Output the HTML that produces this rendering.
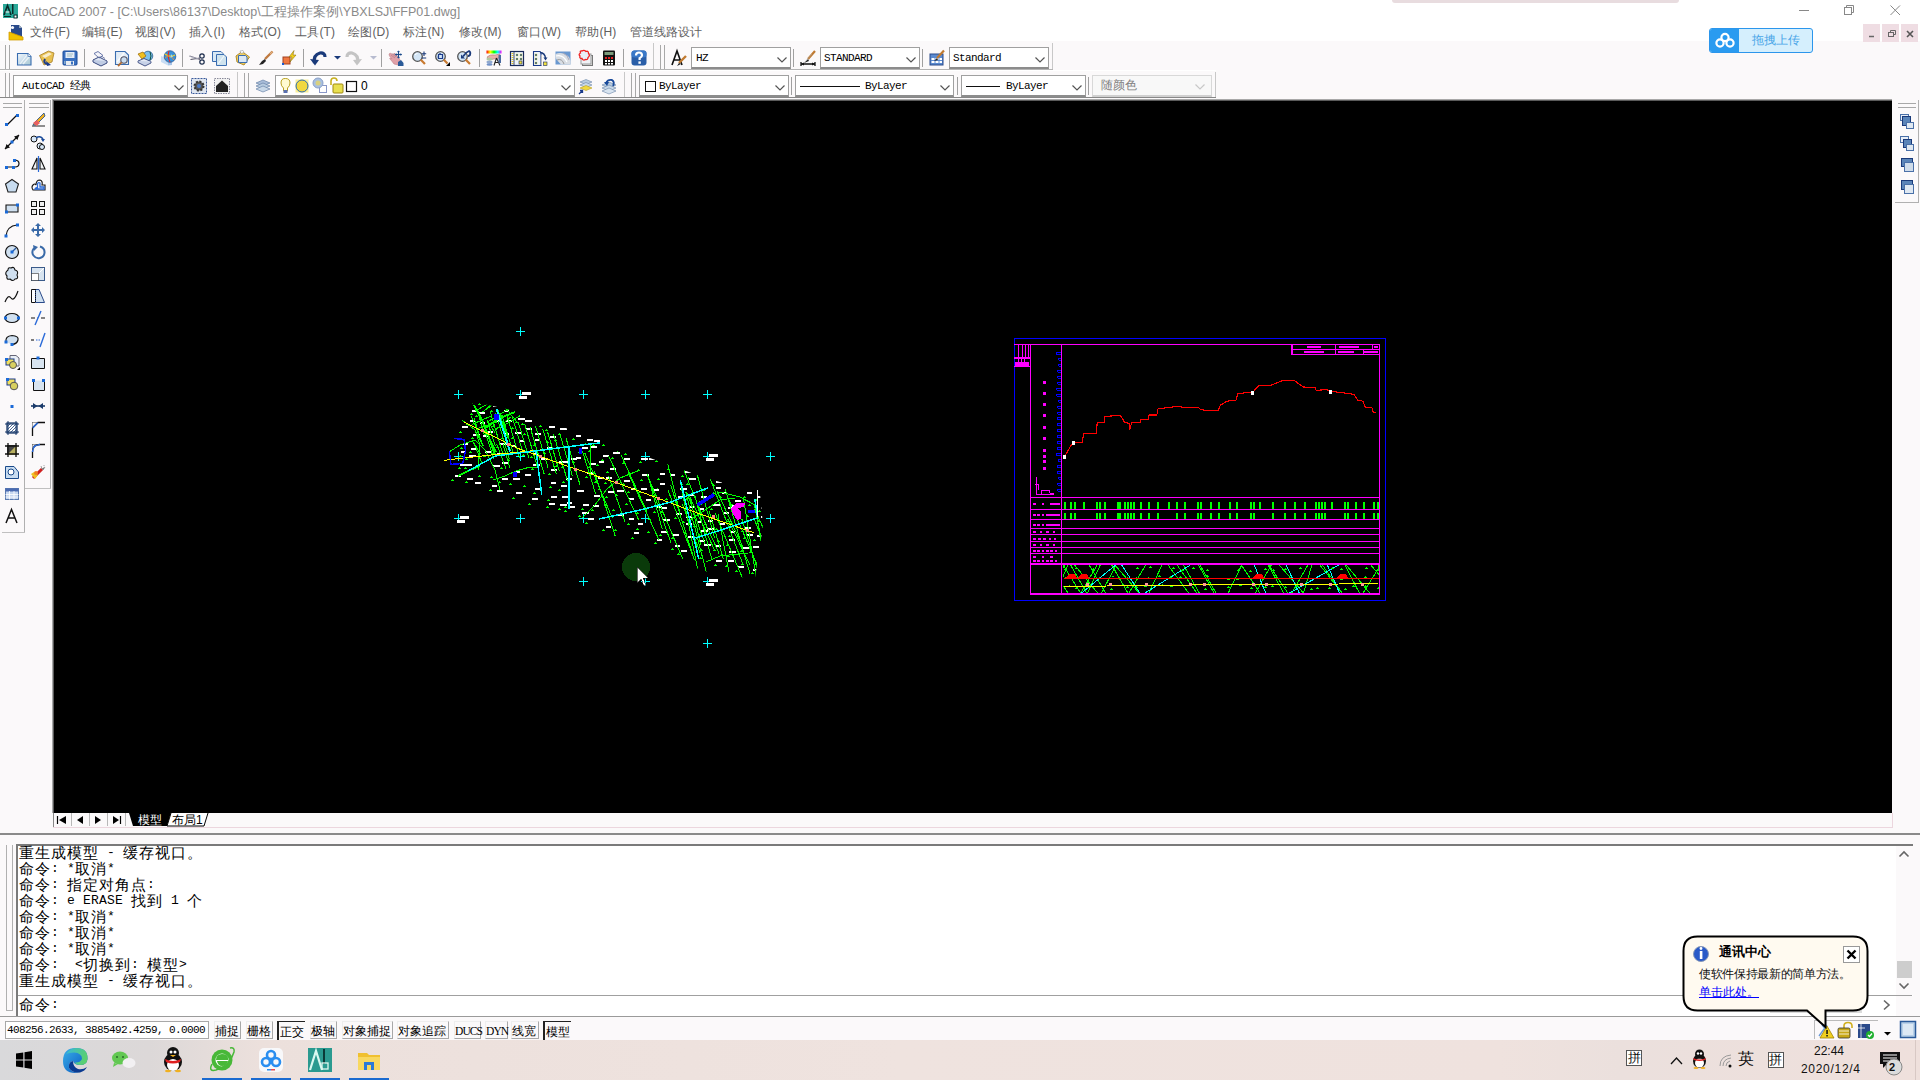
<!DOCTYPE html>
<html><head><meta charset="utf-8">
<style>
*{margin:0;padding:0;box-sizing:border-box}
html,body{width:1920px;height:1080px;overflow:hidden;background:#fbf9fa;font-family:"Liberation Sans", sans-serif}
.a{position:absolute}
.t{position:absolute;white-space:nowrap;line-height:1}
svg{position:absolute;overflow:visible}
.vl{position:absolute;width:1px;background:#a8a8a8}
.hl{position:absolute;height:1px;background:#a8a8a8}
.combo{position:absolute;background:#fff;border:1px solid #a0a0a0;border-bottom:2px solid #8c8c8c}
.mono{font-family:"Liberation Mono", monospace}
</style></head><body>

<div class="a" style="left:0;top:0;width:1920px;height:41px;background:#fff"></div>
<div class="a" style="left:1392px;top:0;width:287px;height:3px;background:#e8dcdf;border-radius:0 0 3px 3px"></div>
<svg style="left:3px;top:4px" width="15" height="15" viewBox="0 0 15 15">
<rect x="0" y="0" width="15" height="14" fill="#2aa898"/>
<path d="M1 11 L4.5 1.5 L8 11" stroke="#0a2a28" stroke-width="1.6" fill="none"/>
<path d="M2.5 8 L6.5 8" stroke="#fff" stroke-width="1"/>
<rect x="9" y="0" width="1.5" height="10" fill="#0a2a28"/>
<rect x="11" y="11" width="3" height="3" fill="#fff" stroke="#0a2a28" stroke-width="1"/>
<rect x="1" y="12" width="7" height="1" fill="#0a2a28"/>
</svg>
<div class="t" style="left:23px;top:6px;font-size:12.5px;color:#8a8a8a">AutoCAD 2007 - [C:\Users\86137\Desktop\<span style="display:inline-block;width:78.6px;vertical-align:top">工程操作案例</span>\YBXLSJ\FFP01.dwg]</div>
<svg style="left:1795px;top:4px" width="120" height="14" viewBox="0 0 120 14">
<path d="M4 6.5 H14" stroke="#888" stroke-width="1"/>
<rect x="49.5" y="3.5" width="7" height="7" fill="none" stroke="#888"/>
<path d="M51.5 3.5 V1.5 H58.5 V8.5 H56.5" fill="none" stroke="#888"/>
<path d="M95.5 1.5 L105 11 M105 1.5 L95.5 11" stroke="#888" stroke-width="1"/>
</svg>
<svg style="left:8px;top:24px" width="16" height="17" viewBox="0 0 16 17">
<path d="M3 1 H11 L14 4 V14 H3 Z" fill="#2a4a8a"/>
<path d="M11 1 L14 4 H11Z" fill="#9ab"/>
<circle cx="4.5" cy="3.5" r="1.6" fill="#fff"/>
<path d="M1 8 L15 13 V16 H1 Z" fill="#f2c200" stroke="#d09a00" stroke-width="0.8"/>
</svg>
<div class="t" style="left:30px;top:26px;font-size:12px;color:#606060"><span style="display:inline-block;width:24.6px;vertical-align:top">文件</span>(F)</div>
<div class="t" style="left:82px;top:26px;font-size:12px;color:#606060"><span style="display:inline-block;width:24.6px;vertical-align:top">编辑</span>(E)</div>
<div class="t" style="left:135px;top:26px;font-size:12px;color:#606060"><span style="display:inline-block;width:24.6px;vertical-align:top">视图</span>(V)</div>
<div class="t" style="left:189px;top:26px;font-size:12px;color:#606060"><span style="display:inline-block;width:24.6px;vertical-align:top">插入</span>(I)</div>
<div class="t" style="left:239px;top:26px;font-size:12px;color:#606060"><span style="display:inline-block;width:24.6px;vertical-align:top">格式</span>(O)</div>
<div class="t" style="left:295px;top:26px;font-size:12px;color:#606060"><span style="display:inline-block;width:24.6px;vertical-align:top">工具</span>(T)</div>
<div class="t" style="left:348px;top:26px;font-size:12px;color:#606060"><span style="display:inline-block;width:24.6px;vertical-align:top">绘图</span>(D)</div>
<div class="t" style="left:403px;top:26px;font-size:12px;color:#606060"><span style="display:inline-block;width:24.6px;vertical-align:top">标注</span>(N)</div>
<div class="t" style="left:459px;top:26px;font-size:12px;color:#606060"><span style="display:inline-block;width:24.6px;vertical-align:top">修改</span>(M)</div>
<div class="t" style="left:517px;top:26px;font-size:12px;color:#606060"><span style="display:inline-block;width:24.6px;vertical-align:top">窗口</span>(W)</div>
<div class="t" style="left:575px;top:26px;font-size:12px;color:#606060"><span style="display:inline-block;width:24.6px;vertical-align:top">帮助</span>(H)</div>
<div class="t" style="left:630px;top:26px;font-size:12px;color:#606060"><span style="display:inline-block;width:72.6px;vertical-align:top">管道线路设计</span></div>
<div class="a" style="left:1863px;top:24px;width:17px;height:18px;background:#efdde3"></div>
<div class="a" style="left:1882px;top:24px;width:17px;height:18px;background:#efdde3"></div>
<div class="a" style="left:1901px;top:24px;width:17px;height:18px;background:#efdde3"></div>
<svg style="left:1863px;top:24px" width="56" height="18" viewBox="0 0 56 18">
<path d="M6 12.5 H11" stroke="#666" stroke-width="1.5"/>
<rect x="25.5" y="8.5" width="5" height="4" fill="none" stroke="#666"/>
<path d="M27.5 8.5 V6.5 H32.5 V10.5 H30.5" fill="none" stroke="#666"/>
<path d="M44 7 L50 13 M50 7 L44 13" stroke="#555" stroke-width="1.6"/>
</svg>
<div class="a" style="left:1709px;top:28px;width:104px;height:25px;border:1px solid #2b96ec;border-radius:3px;background:#d5effd;overflow:hidden">
<div class="a" style="left:0;top:0;width:29px;height:23px;background:#2a9bf0"></div>
<svg style="left:5px;top:3px" width="20" height="17" viewBox="0 0 20 17">
<circle cx="10" cy="5.5" r="3.6" fill="none" stroke="#fff" stroke-width="2.2"/>
<circle cx="5" cy="11" r="3.6" fill="none" stroke="#fff" stroke-width="2.2"/>
<circle cx="15" cy="11" r="3.6" fill="none" stroke="#fff" stroke-width="2.2"/>
</svg>
<div class="t" style="left:42px;top:5px;font-size:12px;color:#4aa6e8">拖拽上传</div>
</div>
<div class="a" style="left:0;top:69px;width:1053px;height:1px;background:#b4b4b4"></div>
<div class="a" style="left:0;top:70px;width:1216px;height:1px;background:#fff"></div>
<div class="a" style="left:0;top:97px;width:1216px;height:1px;background:#888"></div>
<div class="a" style="left:5px;top:45px;width:1px;height:24px;background:#a8a8a8"></div>
<div class="a" style="left:9px;top:45px;width:1px;height:24px;background:#a8a8a8"></div>
<svg style="left:0;top:0" width="0" height="0"><defs><linearGradient id="rb" x1="0" x2="1"><stop offset="0" stop-color="#f00"/><stop offset="0.25" stop-color="#ff0"/><stop offset="0.5" stop-color="#0f0"/><stop offset="0.75" stop-color="#0ff"/><stop offset="1" stop-color="#f0f"/></linearGradient></defs></svg>
<svg style="left:16px;top:50px" width="16" height="16" viewBox="0 0 16 16"><defs><linearGradient id="ng" x1="0" y1="0" x2="1" y2="1"><stop offset="0" stop-color="#f4f8fc"/><stop offset="0.5" stop-color="#c8dcea"/><stop offset="1" stop-color="#a8c8d0"/></linearGradient></defs><path d="M1.5 3.5 H12 L15 6.5 V15 H1.5Z" fill="url(#ng)" stroke="#3a6db0" stroke-width="1.1"/><path d="M12 3.5 V6.5 H15" fill="#fff" stroke="#3a6db0" stroke-width="0.8"/><path d="M4 14 L11 5 M7 14 L13 7" stroke="#fff" stroke-width="1.2" opacity="0.7"/></svg>
<svg style="left:39px;top:50px" width="16" height="16" viewBox="0 0 16 16"><path d="M0.5 5.5 L9.5 1 L15 3 L13 12 L5 15Z" fill="#e8c050" stroke="#a8802a" stroke-width="0.8"/><path d="M3 6 L10 2.5 L13 4 L6 8Z" fill="#fff" opacity="0.7"/><path d="M6 9 Q4 13 8 14" fill="none" stroke="#1a3a8a" stroke-width="2"/><path d="M7 11 L12 15 L8 16Z" fill="#1a3a8a"/></svg>
<svg style="left:62px;top:50px" width="16" height="16" viewBox="0 0 16 16"><rect x="1" y="1" width="14" height="14" rx="1" fill="#3a70c0" stroke="#1a4a9a"/><rect x="3.5" y="2" width="9" height="6" fill="#e4ecf8"/><path d="M5 4 H11 M5 6 H10" stroke="#8aa" stroke-width="0.7"/><rect x="4" y="11" width="8" height="4" fill="#e8ecf0"/><rect x="2" y="11" width="1.5" height="3" fill="#8ac"/><rect x="9" y="11.5" width="2" height="3" fill="#3a70c0"/></svg>
<svg style="left:92px;top:50px" width="16" height="16" viewBox="0 0 16 16"><path d="M2 3.5 L6 1.5 L11 5.5 L7 8Z" fill="#f4f4fa" stroke="#5a6aa0" stroke-width="0.9"/><path d="M1 10 L7 7 L15 11 L9 14.5Z" fill="#dfe6f4" stroke="#3a4a80" stroke-width="1"/><path d="M1 10 V12 L9 16 L15 13 V11" fill="#c0cce4" stroke="#3a4a80" stroke-width="1"/><path d="M7 8 L10 6.5 L13 8.5" fill="none" stroke="#5a6aa0" stroke-width="0.8"/></svg>
<svg style="left:114px;top:50px" width="16" height="16" viewBox="0 0 16 16"><path d="M1.5 1.5 H11 L14.5 5 V14.5 H1.5Z" fill="#e2ecf6" stroke="#3a6db0" stroke-width="1.1"/><path d="M3 12 L10 3" stroke="#fff" stroke-width="1.5" opacity="0.8"/><circle cx="10" cy="10" r="3.2" fill="#c8dcf0" stroke="#556" stroke-width="1.1"/><path d="M7.6 12.4 L4 16" stroke="#b06a30" stroke-width="1.8"/></svg>
<svg style="left:137px;top:50px" width="16" height="16" viewBox="0 0 16 16"><circle cx="11" cy="6" r="4.8" fill="#7ac0ee" stroke="#2a5a8a" stroke-width="0.8"/><path d="M13 2 Q15 6 13 10" stroke="#0a4a3a" fill="none"/><path d="M1 4 L6 2 L9 6 L5 9Z" fill="#f0c020" stroke="#a07010" stroke-width="0.8"/><path d="M1 11 L7 8.5 L14 11.5 L8 14.5Z" fill="#e4eaf6" stroke="#3a4a80" stroke-width="0.9"/><path d="M1 11 V12.5 L8 16 L14 13 V11.5" fill="#c8d2e8" stroke="#3a4a80" stroke-width="0.9"/></svg>
<svg style="left:160px;top:50px" width="16" height="16" viewBox="0 0 16 16"><path d="M1 6 L8 9 V15.5 L1 12Z" fill="#c8dcf4"/><path d="M8 9 L12 11 V15 L8 15.5Z" fill="#a8c4e8"/><circle cx="10" cy="6.5" r="5.8" fill="#3a90d8" stroke="#1a4a8a" stroke-width="0.7"/><path d="M5 4 Q10 8 15 5" stroke="#f0d020" fill="none" stroke-width="1.1"/><path d="M9 1 Q7 6 10 12" stroke="#e02a2a" fill="none" stroke-width="1.1"/><path d="M5 8 Q10 3 14 10" stroke="#f09030" fill="none" stroke-width="0.9"/><path d="M11 4 L13 6.5 L10.5 8Z" fill="#aee" opacity="0.8"/></svg>
<svg style="left:189px;top:50px" width="16" height="16" viewBox="0 0 16 16"><path d="M0.5 6 L11 9.5 M1.5 9.5 L11 8" stroke="#556" stroke-width="1.1"/><path d="M1 6.5 L10 9" stroke="#dde" stroke-width="0.6"/><circle cx="13" cy="6" r="2.2" fill="none" stroke="#1a2a4a" stroke-width="1.2"/><circle cx="13" cy="12" r="2.2" fill="none" stroke="#1a2a4a" stroke-width="1.2"/></svg>
<svg style="left:212px;top:50px" width="16" height="16" viewBox="0 0 16 16"><path d="M0.5 1.5 H9 L11 3.5 V11.5 H0.5Z" fill="#d8e8f4" stroke="#3a6db0"/><path d="M4.5 4.5 H12 L14.5 7 V15.5 H4.5Z" fill="#cfe3ee" stroke="#3a6db0"/><path d="M6 14 L12 6" stroke="#fff" stroke-width="1.2" opacity="0.7"/></svg>
<svg style="left:235px;top:50px" width="16" height="16" viewBox="0 0 16 16"><path d="M1 6 L7 1.5 L14.5 7 L9 15 L2 12Z" fill="#f0d060" stroke="#a88020" stroke-width="0.9"/><path d="M5 1 L8 0.5 L9 2.5 L6 3.5Z" fill="#fff" stroke="#888" stroke-width="0.5"/><path d="M3.5 5.5 H10.5 L12 7 V12.5 H3.5Z" fill="#dbe8f4" stroke="#3a6db0"/></svg>
<svg style="left:258px;top:50px" width="16" height="16" viewBox="0 0 16 16"><path d="M14.5 1.5 L7 9" stroke="#c07a40" stroke-width="2.4"/><path d="M14.5 1.5 L12 4" stroke="#e0b080" stroke-width="1.2"/><path d="M7 9 L4 11 L1 15 L5 14 L8 11Z" fill="#222"/></svg>
<svg style="left:281px;top:50px" width="16" height="16" viewBox="0 0 16 16"><rect x="2" y="7" width="7" height="7" fill="#f07840" stroke="#a04020"/><rect x="1" y="13" width="2" height="2" fill="#1a5ad0"/><path d="M13 0.5 L8 7 H11 L9 12 L15 5 H12Z" fill="#f0d020" stroke="#806000" stroke-width="0.5"/></svg>
<svg style="left:310px;top:50px" width="16" height="16" viewBox="0 0 16 16"><path d="M4.5 13 Q3 5 10 3 Q15 2.5 15 7" fill="none" stroke="#1a3a7a" stroke-width="3.2"/><path d="M0 9 L5 15.5 L9 10Z" fill="#1a3a7a"/></svg>
<svg style="left:346px;top:50px" width="16" height="16" viewBox="0 0 16 16"><path d="M11.5 13 Q13 5 6 3 Q1 2.5 1 7" fill="none" stroke="#c4c4c4" stroke-width="3.2"/><path d="M16 9 L11 15.5 L7 10Z" fill="#c4c4c4"/></svg>
<svg style="left:388px;top:50px" width="16" height="16" viewBox="0 0 16 16"><path d="M1 4 Q2 2.5 4 4 L6 5 Q5 3 7 3.5 L11 8 L13 12 L10 15 L6 14 L3 10 Q1 9 2 8 L4 9 L1.5 6Z" fill="#e0a0a8" stroke="#c08088" stroke-width="0.6"/><path d="M3 5 L7 8 M4 3.5 L8 7 M6 3.5 L9 6.5" stroke="#a07080" stroke-width="0.5"/><path d="M10 12 L13 10 L15.5 13 V16 H10Z" fill="#2a5a98"/><path d="M10.5 1 V8 M7.5 4.5 H13.5" stroke="#1a4a8a" stroke-width="1.2"/><path d="M10.5 0.5 L9 2 H12Z M10.5 8.5 L9 7 H12Z M7 4.5 L8.5 3 V6Z M14 4.5 L12.5 3 V6Z" fill="#1a4a8a"/></svg>
<svg style="left:411px;top:50px" width="16" height="16" viewBox="0 0 16 16"><circle cx="6.5" cy="6.5" r="4.8" fill="#d4e6f6" stroke="#555" stroke-width="1.3"/><path d="M4 5 Q5 3.5 6.5 3.5" stroke="#fff" fill="none"/><path d="M9.8 9.8 L14 14" stroke="#c87a30" stroke-width="2.2"/><path d="M13 1.5 V6 M10.8 3.8 H15.2 M10.8 8 H15.2" stroke="#1a3a7a" stroke-width="1.1"/></svg>
<svg style="left:434px;top:50px" width="16" height="16" viewBox="0 0 16 16"><circle cx="6.5" cy="6.5" r="4.8" fill="#d4e6f6" stroke="#555" stroke-width="1.3"/><path d="M4.5 4.5 H8.5 V8.5 H4.5Z M6 3 V4.5 M3.5 7 H4.5" fill="none" stroke="#1a3a8a" stroke-width="1.2"/><path d="M9.8 9.8 L13.5 13.5" stroke="#c87a30" stroke-width="2.2"/><path d="M12 16 L16 12 V16Z" fill="#000"/></svg>
<svg style="left:456px;top:50px" width="16" height="16" viewBox="0 0 16 16"><circle cx="6.5" cy="6.5" r="4.8" fill="#d4e6f6" stroke="#555" stroke-width="1.3"/><path d="M5 4.5 V8.5 H9Z" fill="#1a3a7a"/><path d="M7 6.5 Q10 2 13 1 Q15 2 14 5 Q13 6 12 6" fill="none" stroke="#1a3a7a" stroke-width="1.8"/><path d="M9.8 9.8 L14 14" stroke="#c87a30" stroke-width="2.2"/></svg>
<svg style="left:486px;top:50px" width="16" height="16" viewBox="0 0 16 16"><rect x="0.5" y="0.5" width="15" height="3" fill="url(#rb)"/><path d="M1 7 Q4 4 9 5 L14 4 L13 8 L8 9 L3 10Z" fill="#e8b0a8" stroke="#a06a60" stroke-width="0.5"/><ellipse cx="3.5" cy="9" rx="3" ry="1.5" fill="#b0c8a0"/><ellipse cx="3.5" cy="12" rx="3" ry="1.5" fill="#90a8d0"/><ellipse cx="3.5" cy="14.5" rx="3" ry="1.2" fill="#7090c8"/><path d="M10.5 8 L8 15.5 M10.5 8 L14 15.5 M9 12.5 H12.8" stroke="#222" stroke-width="1.1"/><rect x="12.5" y="5" width="2.5" height="8" fill="#4a6aa0"/></svg>
<svg style="left:509px;top:50px" width="16" height="16" viewBox="0 0 16 16"><rect x="1.5" y="1.5" width="13" height="14" fill="#eef4fa" stroke="#1a2a5a" stroke-width="1.2"/><path d="M3.5 3 V14" stroke="#e0c020" stroke-width="1.8" stroke-dasharray="1 1"/><path d="M5 2 V15" stroke="#1a2a5a" stroke-width="0.8"/><rect x="7" y="4" width="2" height="2" fill="#1a4a8a" stroke="#e0d040" stroke-width="0.4"/><rect x="11" y="4" width="2" height="2" fill="#1a4a8a" stroke="#e0d040" stroke-width="0.4"/><rect x="7" y="8" width="2" height="2" fill="#1a4a8a" stroke="#e0d040" stroke-width="0.4"/><rect x="11" y="8" width="2" height="2" fill="#1a4a8a" stroke="#e0d040" stroke-width="0.4"/><rect x="10" y="11" width="3" height="3" fill="#f0e040" stroke="#1a2a5a" stroke-width="0.6"/></svg>
<svg style="left:532px;top:50px" width="16" height="16" viewBox="0 0 16 16"><path d="M1.5 1.5 H8 L9 3 V15.5 H1.5Z" fill="#eef4fa" stroke="#1a3a8a" stroke-width="1.1"/><rect x="3" y="4" width="2" height="2" fill="#1a4a8a" stroke="#e0d040" stroke-width="0.4"/><rect x="3" y="8" width="2" height="2" fill="#1a4a8a" stroke="#e0d040" stroke-width="0.4"/><rect x="3" y="12" width="2" height="2" fill="#1a4a8a" stroke="#e0d040" stroke-width="0.4"/><path d="M8 2.5 Q13 3 13.5 8" stroke="#1a3a7a" fill="none" stroke-width="1.4"/><path d="M11.5 7.5 L13.5 10.5 L15.5 7.5Z" fill="#1a3a7a"/><rect x="11.5" y="12" width="3.5" height="3.5" fill="#f0e040" stroke="#1a2a5a" stroke-width="0.6"/><path d="M9.5 5 V15" stroke="#bbb"/></svg>
<svg style="left:555px;top:50px" width="16" height="16" viewBox="0 0 16 16"><rect x="0.5" y="1.5" width="15" height="13" fill="#6a98d0"/><path d="M0.5 4 Q7 1 14 7 L15.5 11 V14.5 H6 Q2 10 0.5 8Z" fill="#d8dde4"/><path d="M1 6 Q8 4 12 12" stroke="#fff" fill="none" stroke-width="1.2"/><path d="M2 10 Q7 8 9 14" stroke="#999" fill="none"/><path d="M8 3 Q13 5 14 10" stroke="#aab" fill="none"/></svg>
<svg style="left:578px;top:50px" width="16" height="16" viewBox="0 0 16 16"><rect x="4.5" y="5.5" width="10" height="10" fill="#e4e4e4" stroke="#777"/><rect x="3" y="4" width="10" height="10" fill="#f0f2f6" stroke="#999"/><path d="M2.5 3 Q1.5 0.5 4 1 Q6 -0.5 8 1.5 Q10.5 0.5 10.5 3.5 Q12.5 5.5 10 7.5 Q10 10 7.5 9.5 Q5 11 4 8.5 Q1 8.5 2 6 Q0 4.5 2.5 3Z" fill="#e8eef8" stroke="#f02020" stroke-width="1.3"/></svg>
<svg style="left:601px;top:50px" width="16" height="16" viewBox="0 0 16 16"><rect x="2" y="0.5" width="12" height="15" rx="1" fill="#111"/><rect x="3.5" y="2" width="9" height="3" fill="#7a9a7a"/><g fill="#fff"><rect x="4" y="7" width="2" height="2" fill="#e02020"/><rect x="7" y="7" width="2" height="2" fill="#e02020"/><rect x="10" y="7" width="2" height="2" fill="#e02020"/><rect x="4" y="10" width="2" height="2"/><rect x="7" y="10" width="2" height="2"/><rect x="10" y="10" width="2" height="2"/><rect x="4" y="13" width="2" height="1.5"/><rect x="7" y="13" width="2" height="1.5"/><rect x="10" y="13" width="2" height="1.5"/></g></svg>
<svg style="left:631px;top:50px" width="16" height="16" viewBox="0 0 16 16"><rect x="0.5" y="0.5" width="15" height="15" rx="3" fill="#2a5ea8"/><rect x="0.5" y="0.5" width="15" height="7" rx="3" fill="#3a78c8"/><path d="M5 5.5 Q5 2.5 8 2.5 Q11 2.5 11 5.2 Q11 7 8.6 8.2 V10" fill="none" stroke="#fff" stroke-width="2.2"/><rect x="7.4" y="11.4" width="2.4" height="2.4" fill="#fff"/></svg>
<div class="a" style="left:84px;top:49px;width:1px;height:18px;background:#a0a0a0"></div>
<div class="a" style="left:182px;top:49px;width:1px;height:18px;background:#a0a0a0"></div>
<div class="a" style="left:303px;top:49px;width:1px;height:18px;background:#a0a0a0"></div>
<div class="a" style="left:381px;top:49px;width:1px;height:18px;background:#a0a0a0"></div>
<div class="a" style="left:479px;top:49px;width:1px;height:18px;background:#a0a0a0"></div>
<div class="a" style="left:623px;top:49px;width:1px;height:18px;background:#a0a0a0"></div>
<svg style="left:334px;top:56px" width="8" height="4" viewBox="0 0 8 4"><path d="M0 0 H7 L3.5 3.5Z" fill="#1a3a7a"/></svg>
<svg style="left:370px;top:56px" width="8" height="4" viewBox="0 0 8 4"><path d="M0 0 H7 L3.5 3.5Z" fill="#b8bcd0"/></svg>
<div class="a" style="left:653px;top:43px;width:1px;height:26px;background:#c8c8c8"></div>
<div class="a" style="left:660px;top:45px;width:1px;height:24px;background:#a8a8a8"></div>
<div class="a" style="left:664px;top:45px;width:1px;height:24px;background:#a8a8a8"></div>
<svg style="left:671px;top:50px" width="16" height="16" viewBox="0 0 16 16"><path d="M1 15 L6 1 L11 15 M3 10 H9" stroke="#111" stroke-width="1.6" fill="none"/><path d="M15 6 L8 13" stroke="#c07a30" stroke-width="2.4"/><path d="M8 13 L6 16 L10 14Z" fill="#222"/></svg>
<div class="combo" style="left:691px;top:47px;width:100px;height:22px"></div>
<div class="t" style="left:696px;top:53px;font-family:'Liberation Mono', monospace;font-size:11px;color:#000;letter-spacing:-0.6px">HZ</div>
<svg style="left:777px;top:57px" width="10" height="6" viewBox="0 0 10 6"><path d="M0.5 0.5 L5 5 L9.5 0.5" fill="none" stroke="#555" stroke-width="1.2"/></svg>
<div class="a" style="left:793px;top:49px;width:1px;height:18px;background:#a0a0a0"></div>
<svg style="left:800px;top:50px" width="16" height="16" viewBox="0 0 16 16"><path d="M1 12 V16 M15 12 V16 M1 14 H15" stroke="#111" stroke-width="1.3"/><path d="M1 14 L4 12.5 V15.5Z M15 14 L12 12.5 V15.5Z" fill="#111"/><path d="M15 1 L8 9" stroke="#c07a30" stroke-width="2.2"/><path d="M8 9 L4 13 L9 11Z" fill="#222"/><path d="M4 13 L12 4" stroke="#aaa" stroke-width="0.6"/></svg>
<div class="combo" style="left:820px;top:47px;width:100px;height:22px"></div>
<div class="t" style="left:824px;top:53px;font-family:'Liberation Mono', monospace;font-size:11px;color:#000;letter-spacing:-0.6px">STANDARD</div>
<svg style="left:906px;top:57px" width="10" height="6" viewBox="0 0 10 6"><path d="M0.5 0.5 L5 5 L9.5 0.5" fill="none" stroke="#555" stroke-width="1.2"/></svg>
<div class="a" style="left:922px;top:49px;width:1px;height:18px;background:#a0a0a0"></div>
<svg style="left:929px;top:50px" width="16" height="16" viewBox="0 0 16 16"><rect x="1" y="4" width="13" height="11" fill="#5a8ad0" stroke="#2a4a8a"/><g fill="#fff"><rect x="2.5" y="8" width="3" height="2"/><rect x="6.5" y="8" width="3" height="2"/><rect x="10.5" y="8" width="2.5" height="2"/><rect x="2.5" y="11" width="3" height="2"/><rect x="6.5" y="11" width="3" height="2"/><rect x="10.5" y="11" width="2.5" height="2"/></g><path d="M15 0.5 L8 8" stroke="#c07a30" stroke-width="2.2"/><path d="M8 8 L5 11 L9 10Z" fill="#222"/></svg>
<div class="combo" style="left:949px;top:47px;width:100px;height:22px"></div>
<div class="t" style="left:953px;top:53px;font-family:'Liberation Mono', monospace;font-size:11px;color:#000;letter-spacing:-0.6px">Standard</div>
<svg style="left:1035px;top:57px" width="10" height="6" viewBox="0 0 10 6"><path d="M0.5 0.5 L5 5 L9.5 0.5" fill="none" stroke="#555" stroke-width="1.2"/></svg>
<div class="a" style="left:1052px;top:43px;width:1px;height:26px;background:#c8c8c8"></div>
<div class="a" style="left:5px;top:73px;width:1px;height:24px;background:#a8a8a8"></div>
<div class="a" style="left:9px;top:73px;width:1px;height:24px;background:#a8a8a8"></div>
<div class="combo" style="left:13px;top:75px;width:175px;height:22px"></div>
<div class="t" style="left:22px;top:81px;font-family:'Liberation Mono', monospace;font-size:11px;color:#000;letter-spacing:-0.6px">AutoCAD 经典</div>
<svg style="left:174px;top:85px" width="10" height="6" viewBox="0 0 10 6"><path d="M0.5 0.5 L5 5 L9.5 0.5" fill="none" stroke="#555" stroke-width="1.2"/></svg>
<svg style="left:191px;top:78px" width="16" height="16" viewBox="0 0 16 16"><rect x="0.5" y="0.5" width="15" height="15" fill="#dfe6f0" stroke="#3a5a9a" stroke-dasharray="2 1"/><circle cx="8" cy="8" r="4.5" fill="#555" stroke="#333" stroke-width="2" stroke-dasharray="2 1.5"/><circle cx="8" cy="8" r="2" fill="#4a7ac8"/></svg>
<svg style="left:214px;top:78px" width="16" height="16" viewBox="0 0 16 16"><rect x="0.5" y="0.5" width="15" height="15" fill="#f2f2f2" stroke="#889" stroke-dasharray="1.5 1"/><path d="M2 8 L8 2.5 L14 8 V14 H2Z" fill="#222"/></svg>
<div class="a" style="left:237px;top:72px;width:1px;height:25px;background:#c8c8c8"></div>
<div class="a" style="left:244px;top:73px;width:1px;height:24px;background:#a8a8a8"></div>
<div class="a" style="left:248px;top:73px;width:1px;height:24px;background:#a8a8a8"></div>
<svg style="left:255px;top:78px" width="16" height="16" viewBox="0 0 16 16"><path d="M1 5 L8 2 L15 5 L8 8Z" fill="#a8bcd8" stroke="#6a84a8" stroke-width="0.7"/><path d="M1 8 L8 5 L15 8 L8 11Z" fill="#b8cce0" stroke="#6a84a8" stroke-width="0.7"/><path d="M1 11 L8 8 L15 11 L8 14Z" fill="#c8d8e8" stroke="#6a84a8" stroke-width="0.7"/></svg>
<div class="combo" style="left:275px;top:75px;width:300px;height:22px"></div>
<svg style="left:561px;top:85px" width="10" height="6" viewBox="0 0 10 6"><path d="M0.5 0.5 L5 5 L9.5 0.5" fill="none" stroke="#555" stroke-width="1.2"/></svg>
<svg style="left:280px;top:77px" width="90" height="18" viewBox="0 0 90 18">
<path d="M5 1.5 Q1 1.5 1 6 Q1 9 3.5 11 V14 H7.5 V11 Q10 9 10 6 Q10 1.5 5.5 1.5Z" fill="#fffbd0" stroke="#b8a020"/><rect x="3.5" y="13" width="4" height="3" fill="#5a70b0"/>
<rect x="15.5" y="2.5" width="13" height="13" fill="#f6e030" opacity="0.5"/><circle cx="22" cy="9" r="6" fill="#f0d840" stroke="#2a6ab0" stroke-width="1"/>
<rect x="39.5" y="8.5" width="7" height="7" fill="#fff" stroke="#8a98c8"/><circle cx="38" cy="6" r="5" fill="#a8c0e0" stroke="#8aa0c8"/><circle cx="38" cy="6" r="2.5" fill="#d8d080"/>
<path d="M51 8 V4 Q51 1 54 1 Q57 1 57 4" fill="none" stroke="#c8b020" stroke-width="1.6"/><rect x="53" y="7" width="10" height="9" rx="1" fill="#e8e050" stroke="#a08810"/>
<rect x="66.5" y="4.5" width="10" height="10" fill="#fff" stroke="#111" stroke-width="1.2"/>
</svg>
<div class="t" style="left:361px;top:80px;font-family:'Liberation Sans',sans-serif;font-size:12px;color:#000">0</div>
<svg style="left:578px;top:78px" width="16" height="16" viewBox="0 0 16 16"><path d="M2 4 L8 1.5 L14 4 L8 6.5Z" fill="#b8cce0" stroke="#6a84a8" stroke-width="0.6"/><path d="M2 7 L8 4.5 L14 7 L8 9.5Z" fill="#c8d8e8" stroke="#6a84a8" stroke-width="0.6"/><path d="M2 10 L8 7.5 L14 10 L8 12.5Z" fill="#f0d840" stroke="#b8a020" stroke-width="0.6"/><path d="M1 16 L4 13 M2 12.5 H4.5 V15" stroke="#1a3a8a" stroke-width="1.3" fill="none"/></svg>
<svg style="left:601px;top:78px" width="16" height="16" viewBox="0 0 16 16"><path d="M1 7 L8 4 L15 7 L8 10Z" fill="#b8cce0" stroke="#6a84a8" stroke-width="0.6"/><path d="M1 10 L8 7 L15 10 L8 13Z" fill="#c8d8e8" stroke="#6a84a8" stroke-width="0.6"/><path d="M1 13 L8 10 L15 13 L8 16Z" fill="#d8e4f0" stroke="#6a84a8" stroke-width="0.6"/><path d="M5 6 Q6 1 11 2 Q14 4 12 8" fill="none" stroke="#1a4a9a" stroke-width="1.8"/><path d="M3 4 L6 8 L8 4Z" fill="#1a4a9a"/></svg>
<div class="a" style="left:624px;top:72px;width:1px;height:25px;background:#c8c8c8"></div>
<div class="a" style="left:631px;top:73px;width:1px;height:24px;background:#a8a8a8"></div>
<div class="a" style="left:635px;top:73px;width:1px;height:24px;background:#a8a8a8"></div>
<div class="combo" style="left:639px;top:75px;width:150px;height:22px"></div>
<div class="a" style="left:645px;top:81px;width:11px;height:11px;border:1.2px solid #111;background:#fff"></div>
<div class="t" style="left:659px;top:81px;font-family:'Liberation Mono', monospace;font-size:11px;color:#000;letter-spacing:-0.6px">ByLayer</div>
<svg style="left:775px;top:85px" width="10" height="6" viewBox="0 0 10 6"><path d="M0.5 0.5 L5 5 L9.5 0.5" fill="none" stroke="#555" stroke-width="1.2"/></svg>
<div class="a" style="left:791px;top:77px;width:1px;height:18px;background:#a0a0a0"></div>
<div class="combo" style="left:795px;top:75px;width:159px;height:22px"></div>
<div class="a" style="left:800px;top:86px;width:60px;height:1px;background:#111"></div>
<div class="t" style="left:865px;top:81px;font-family:'Liberation Mono', monospace;font-size:11px;color:#000;letter-spacing:-0.6px">ByLayer</div>
<svg style="left:940px;top:85px" width="10" height="6" viewBox="0 0 10 6"><path d="M0.5 0.5 L5 5 L9.5 0.5" fill="none" stroke="#555" stroke-width="1.2"/></svg>
<div class="a" style="left:957px;top:77px;width:1px;height:18px;background:#a0a0a0"></div>
<div class="combo" style="left:961px;top:75px;width:125px;height:22px"></div>
<div class="a" style="left:966px;top:86px;width:34px;height:1px;background:#111"></div>
<div class="t" style="left:1006px;top:81px;font-family:'Liberation Mono', monospace;font-size:11px;color:#000;letter-spacing:-0.6px">ByLayer</div>
<svg style="left:1072px;top:85px" width="10" height="6" viewBox="0 0 10 6"><path d="M0.5 0.5 L5 5 L9.5 0.5" fill="none" stroke="#555" stroke-width="1.2"/></svg>
<div class="a" style="left:1088px;top:77px;width:1px;height:18px;background:#a0a0a0"></div>
<div class="a" style="left:1092px;top:75px;width:120px;height:22px;background:#f8f8f8;border:1px solid #d8d8d8;border-bottom:2px solid #d0d0d0"></div>
<div class="t" style="left:1101px;top:79px;font-size:12px;color:#808080">随颜色</div>
<svg style="left:1195px;top:84px" width="10" height="6" viewBox="0 0 10 6"><path d="M0.5 0.5 L5 5 L9.5 0.5" fill="none" stroke="#c8c8c8" stroke-width="1.2"/></svg>
<div class="a" style="left:1215px;top:72px;width:1px;height:25px;background:#c8c8c8"></div>
<div class="a" style="left:24px;top:100px;width:1px;height:433px;background:#b0b0b0"></div>
<div class="a" style="left:2px;top:532px;width:23px;height:1px;background:#c0c0c0"></div>
<div class="a" style="left:50px;top:100px;width:1px;height:389px;background:#b0b0b0"></div>
<div class="a" style="left:25px;top:488px;width:26px;height:1px;background:#c0c0c0"></div>
<div class="a" style="left:3px;top:103px;width:19px;height:1px;background:#a8a8a8"></div>
<div class="a" style="left:3px;top:107px;width:19px;height:1px;background:#a8a8a8"></div>
<div class="a" style="left:29px;top:103px;width:20px;height:1px;background:#a8a8a8"></div>
<div class="a" style="left:29px;top:107px;width:20px;height:1px;background:#a8a8a8"></div>
<svg style="left:4px;top:112px" width="16" height="16" viewBox="0 0 16 16"><path d="M3 13 L13 3" stroke="#111" stroke-width="1.2"/><rect x="1" y="11" width="3" height="3" fill="#1a6ad8"/><rect x="12" y="2" width="3" height="3" fill="#1a6ad8"/></svg>
<svg style="left:4px;top:134px" width="16" height="16" viewBox="0 0 16 16"><path d="M1 15 L15 1" stroke="#111" stroke-width="1.2"/><path d="M15 1 L10 2.5 L13.5 6Z M1 15 L6 13.5 L2.5 10Z" fill="#111"/><rect x="6.5" y="6.5" width="3" height="3" fill="#1a6ad8"/></svg>
<svg style="left:4px;top:156px" width="16" height="16" viewBox="0 0 16 16"><path d="M2 11 H11 Q15 11 15 7.5 Q15 4 10 4" stroke="#111" fill="none" stroke-width="1.2"/><rect x="1" y="10" width="3" height="3" fill="#1a6ad8"/><rect x="8" y="10" width="3" height="3" fill="#1a6ad8"/><rect x="9" y="3" width="3" height="3" fill="#1a6ad8"/></svg>
<svg style="left:4px;top:178px" width="16" height="16" viewBox="0 0 16 16"><path d="M8 1.5 L14.5 6 L12 14 H4 L1.5 6Z" fill="#c8dcf0" stroke="#222" stroke-width="1.1"/></svg>
<svg style="left:4px;top:200px" width="16" height="16" viewBox="0 0 16 16"><path d="M2 5 H14 V12 H2Z" fill="#d0e0f0" stroke="#111" stroke-width="1.1"/><rect x="1" y="10.5" width="3" height="3" fill="#1a6ad8"/><rect x="12" y="3.5" width="3" height="3" fill="#1a6ad8"/></svg>
<svg style="left:4px;top:222px" width="16" height="16" viewBox="0 0 16 16"><path d="M2 14 Q3 4 13 3" stroke="#111" fill="none" stroke-width="1.2"/><rect x="0.5" y="12.5" width="3" height="3" fill="#1a6ad8"/><rect x="12" y="1.5" width="3" height="3" fill="#1a6ad8"/></svg>
<svg style="left:4px;top:244px" width="16" height="16" viewBox="0 0 16 16"><circle cx="8" cy="8" r="6.5" fill="#d0e0f0" stroke="#111" stroke-width="1.2"/><path d="M8 8 L12 4" stroke="#2a5aa0" stroke-width="1.2"/><rect x="6.5" y="6.5" width="3" height="3" fill="#1a6ad8"/></svg>
<svg style="left:4px;top:266px" width="16" height="16" viewBox="0 0 16 16"><path d="M4 4 Q4 1 7 2 Q10 0 11 4 Q15 5 13 9 Q15 13 11 13 Q9 16 6 13 Q2 14 3 10 Q0 7 4 4Z" fill="#d0e0f0" stroke="#111" stroke-width="1.1"/></svg>
<svg style="left:4px;top:288px" width="16" height="16" viewBox="0 0 16 16"><path d="M1 14 Q4 6 7 10 Q10 14 14 3" stroke="#111" fill="none" stroke-width="1.2"/></svg>
<svg style="left:4px;top:310px" width="16" height="16" viewBox="0 0 16 16"><ellipse cx="8" cy="8" rx="7" ry="4.5" fill="#d0e0f0" stroke="#111" stroke-width="1.2"/><rect x="0" y="6.5" width="3" height="3" fill="#1a6ad8"/><rect x="13" y="6.5" width="3" height="3" fill="#1a6ad8"/></svg>
<svg style="left:4px;top:332px" width="16" height="16" viewBox="0 0 16 16"><path d="M2 10 Q1 4 8 3.5 Q15 4 14 8 Q13 12 8 12.5" fill="#d0e0f0" stroke="#111" stroke-width="1.2"/><rect x="0.5" y="8.5" width="3" height="3" fill="#1a6ad8"/><rect x="6.5" y="11" width="3" height="3" fill="#1a6ad8"/></svg>
<svg style="left:4px;top:354px" width="16" height="16" viewBox="0 0 16 16"><path d="M6 1.5 H12 L15 4 V12 H6Z" fill="#e8eef6" stroke="#667"/><rect x="2" y="5" width="8" height="6" fill="#f0e060" stroke="#1a3a8a"/><circle cx="9" cy="11" r="3.5" fill="#d8d060" stroke="#555"/><rect x="1" y="4" width="3" height="3" fill="#1a6ad8"/><path d="M13 16 L16 13 V16Z" fill="#000"/></svg>
<svg style="left:4px;top:376px" width="16" height="16" viewBox="0 0 16 16"><rect x="3" y="3" width="8" height="6" fill="#f0e060" stroke="#1a3a8a"/><circle cx="10" cy="10" r="3.8" fill="#d8d060" stroke="#555"/><rect x="2" y="2" width="3" height="3" fill="#1a6ad8"/></svg>
<svg style="left:4px;top:398px" width="16" height="16" viewBox="0 0 16 16"><rect x="6.5" y="7" width="3" height="3" fill="#1a6ad8"/></svg>
<svg style="left:4px;top:420px" width="16" height="16" viewBox="0 0 16 16"><rect x="3" y="3" width="10" height="10" fill="#fff" stroke="#1a3a6a" stroke-width="1.3"/><path d="M3 7 L7 3 M3 10 L10 3 M3 13 L13 3 M6 13 L13 6 M9 13 L13 9" stroke="#3a5a8a" stroke-width="0.9"/><path d="M1 4 H15 M1 12 H15 M4 1 V15 M12 1 V15" stroke="#1a3a6a" stroke-width="1"/></svg>
<svg style="left:4px;top:442px" width="16" height="16" viewBox="0 0 16 16"><rect x="3" y="3" width="10" height="10" fill="#444"/><path d="M3 13 L13 3 V13Z" fill="#b8b060"/><path d="M1 4 H15 M1 12 H15 M4 1 V15 M12 1 V15" stroke="#111" stroke-width="1.3"/></svg>
<svg style="left:4px;top:464px" width="16" height="16" viewBox="0 0 16 16"><path d="M1.5 2.5 H10 L14.5 8 V14.5 H1.5Z" fill="#c8dcf0" stroke="#1a4a8a"/><circle cx="7" cy="8" r="3" fill="#fff" stroke="#1a4a8a"/></svg>
<svg style="left:4px;top:486px" width="16" height="16" viewBox="0 0 16 16"><rect x="1.5" y="2.5" width="13" height="11" fill="#c8d8f0" stroke="#5a7ab0"/><rect x="1.5" y="2.5" width="13" height="3" fill="#4a6ab0"/><path d="M1.5 8.5 H14.5 M1.5 11 H14.5 M5.5 5 V13.5 M10 5 V13.5" stroke="#fff" stroke-width="0.8"/></svg>
<svg style="left:4px;top:508px" width="16" height="16" viewBox="0 0 16 16"><path d="M2 15 L7.5 1.5 L13 15 M4.2 10 H10.8" stroke="#111" stroke-width="1.5" fill="none"/></svg>
<svg style="left:30px;top:112px" width="16" height="16" viewBox="0 0 16 16"><path d="M2 14 H15" stroke="#222"/><path d="M14 1 L5 10 L3 13 L6 13 L15 4Z" fill="#f0b020" stroke="#1a4a8a" stroke-width="0.8"/><path d="M7 8 L10 11 L6.5 14 L3 11Z" fill="#e86060"/></svg>
<svg style="left:30px;top:134px" width="16" height="16" viewBox="0 0 16 16"><circle cx="4" cy="5" r="3" fill="#d8e8f8" stroke="#111"/><circle cx="10" cy="12" r="3" fill="#d8e8f8" stroke="#111"/><circle cx="12" cy="13" r="2.5" fill="#d8e8f8" stroke="#111"/><path d="M6 4 Q10 1 13 5" stroke="#1a4a9a" fill="none" stroke-width="1.6"/><path d="M11 5 L15 5 L13 8Z" fill="#1a4a9a"/></svg>
<svg style="left:30px;top:156px" width="16" height="16" viewBox="0 0 16 16"><path d="M7 2 L2 13 H7Z M10 2 L15 13 H10Z" fill="#f2f4f6" stroke="#111" stroke-width="1.1"/><path d="M8.5 0 V16" stroke="#2a6ad8" stroke-width="1.2"/></svg>
<svg style="left:30px;top:178px" width="16" height="16" viewBox="0 0 16 16"><path d="M3 12 Q1 9 3 7 Q5 5 6 7 Q6 2 10 2 Q13 3 12 7 H15 V12Z" fill="none" stroke="#111" stroke-width="1.1"/><path d="M5 11 Q6 9 7.5 10 V6 Q8 4 10 5 V9 H14 V11Z" fill="none" stroke="#2a6ad8" stroke-width="1.3"/></svg>
<svg style="left:30px;top:200px" width="16" height="16" viewBox="0 0 16 16"><rect x="1.5" y="1.5" width="5" height="5" fill="#eee" stroke="#111"/><rect x="9.5" y="1.5" width="5" height="5" fill="#eee" stroke="#111"/><rect x="1.5" y="9.5" width="5" height="5" fill="#eee" stroke="#111"/><rect x="9.5" y="9.5" width="5" height="5" fill="#eee" stroke="#111"/></svg>
<svg style="left:30px;top:222px" width="16" height="16" viewBox="0 0 16 16"><path d="M8 1 L11 4 H9 V7 H12 V5 L15 8 L12 11 V9 H9 V12 H11 L8 15 L5 12 H7 V9 H4 V11 L1 8 L4 5 V7 H7 V4 H5Z" fill="#3a6aa8"/></svg>
<svg style="left:30px;top:244px" width="16" height="16" viewBox="0 0 16 16"><path d="M4 4 Q1 8 3.5 11.5 Q6 15 10 14 Q14 13 14.5 9 Q15 4 10 2.5" stroke="#3a6aa8" fill="none" stroke-width="2"/><path d="M3 1 L8 3 L4 7Z" fill="#3a6aa8"/></svg>
<svg style="left:30px;top:266px" width="16" height="16" viewBox="0 0 16 16"><rect x="1.5" y="1.5" width="13" height="13" fill="#d8e4f0" stroke="#3a5a8a"/><path d="M2 14 L14 2" stroke="#fff"/><rect x="1.5" y="7.5" width="7" height="7" fill="#fff" stroke="#111" stroke-dasharray="1 1"/></svg>
<svg style="left:30px;top:288px" width="16" height="16" viewBox="0 0 16 16"><path d="M1.5 1.5 H5.5 V14.5 H1.5Z" fill="#fff" stroke="#111"/><path d="M5.5 1.5 H9 L14.5 14.5 H5.5Z" fill="#d0e0f0" stroke="#2a4a8a"/><path d="M5.5 1 V15" stroke="#111" stroke-dasharray="1 1"/></svg>
<svg style="left:30px;top:310px" width="16" height="16" viewBox="0 0 16 16"><path d="M1 8 H5 M11 8 H15" stroke="#111" stroke-width="1.1"/><path d="M7 8 H9" stroke="#2a6ad8" stroke-dasharray="1 1"/><path d="M5 15 L11 1" stroke="#2a6ad8" stroke-width="1.4"/></svg>
<svg style="left:30px;top:332px" width="16" height="16" viewBox="0 0 16 16"><path d="M1 8 H4" stroke="#111" stroke-width="1.1"/><path d="M6 8 H10" stroke="#2a6ad8" stroke-dasharray="1.5 1"/><path d="M10 15 L15 1" stroke="#2a6ad8" stroke-width="1.4"/></svg>
<svg style="left:30px;top:354px" width="16" height="16" viewBox="0 0 16 16"><path d="M1.5 4.5 H14.5 V14.5 H1.5Z" fill="#d8e4f0" stroke="#111"/><rect x="6.5" y="2.5" width="3" height="3" fill="#1a6ad8"/></svg>
<svg style="left:30px;top:376px" width="16" height="16" viewBox="0 0 16 16"><path d="M3.5 4.5 V14.5 H14.5 V4.5" fill="#d8e4f0" stroke="#111"/><rect x="2" y="3" width="3" height="3" fill="#1a6ad8"/><rect x="12" y="3" width="3" height="3" fill="#1a6ad8"/></svg>
<svg style="left:30px;top:398px" width="16" height="16" viewBox="0 0 16 16"><path d="M1 8 H15" stroke="#1a3a6a" stroke-width="1.6"/><path d="M3 5 L7.5 8 L3 11Z M13 5 L8.5 8 L13 11Z" fill="#1a3a6a"/></svg>
<svg style="left:30px;top:420px" width="16" height="16" viewBox="0 0 16 16"><path d="M2.5 16 V8 L8 2.5 H15" stroke="#111" fill="none" stroke-width="1.3"/><path d="M2.5 8 L8 2.5" stroke="#2a6ad8" stroke-width="1.6"/><path d="M2.5 2.5 H8 M2.5 2.5 V8" stroke="#444" stroke-dasharray="1 1"/></svg>
<svg style="left:30px;top:442px" width="16" height="16" viewBox="0 0 16 16"><path d="M2.5 16 V10 Q2.5 2.5 10 2.5 H15" stroke="#111" fill="none" stroke-width="1.3"/><path d="M2.5 10 Q2.5 2.5 10 2.5" stroke="#2a6ad8" fill="none" stroke-width="1.6"/><path d="M2.5 2.5 H8 M2.5 2.5 V8" stroke="#444" stroke-dasharray="1 1"/></svg>
<svg style="left:30px;top:464px" width="16" height="16" viewBox="0 0 16 16"><path d="M3 14 L12 5" stroke="#d02020" stroke-width="3"/><path d="M1 10 L5 15 L8 11 L4 8Z" fill="#f0c020"/><path d="M11 2 L12 5 L15 3 L13 6 M14 1 V2" stroke="#999" stroke-width="0.8"/><circle cx="6" cy="9" r="2" fill="#f08020"/></svg>
<div class="a" style="left:1918px;top:100px;width:1px;height:103px;background:#b0b0b0"></div>
<div class="a" style="left:1895px;top:202px;width:24px;height:1px;background:#b0b0b0"></div>
<div class="a" style="left:1898px;top:103px;width:18px;height:1px;background:#a8a8a8"></div>
<div class="a" style="left:1898px;top:107px;width:18px;height:1px;background:#a8a8a8"></div>
<svg style="left:1899px;top:113px" width="16" height="16" viewBox="0 0 16 16"><rect x="1.5" y="1.5" width="8" height="6" fill="#e8eef8" stroke="#4a70a8"/><rect x="3.5" y="3.5" width="8" height="9" fill="#5a84b8" stroke="#1a3a7a"/><rect x="7.5" y="9.5" width="7" height="6" fill="#dfe8f2" stroke="#4a70a8"/></svg>
<svg style="left:1899px;top:135px" width="16" height="16" viewBox="0 0 16 16"><rect x="1.5" y="1.5" width="8" height="6" fill="#e8eef8" stroke="#4a70a8"/><rect x="4.5" y="4.5" width="8" height="8" fill="#5a84b8" stroke="#1a3a7a"/><rect x="7.5" y="9.5" width="7" height="6" fill="#dfe8f2" stroke="#4a70a8"/></svg>
<svg style="left:1899px;top:157px" width="16" height="16" viewBox="0 0 16 16"><rect x="2.5" y="1.5" width="11" height="8" fill="#5a84b8" stroke="#1a3a7a"/><rect x="5.5" y="5.5" width="9" height="9" fill="#cfdcea" stroke="#4a70a8"/></svg>
<svg style="left:1899px;top:179px" width="16" height="16" viewBox="0 0 16 16"><rect x="2.5" y="1.5" width="11" height="9" fill="#5a84b8" stroke="#1a3a7a"/><rect x="5.5" y="5.5" width="9" height="9" fill="#dfe8f2" stroke="#4a70a8"/></svg>
<div class="a" style="left:52px;top:99px;width:1840px;height:714px;background:#000"></div>
<div class="a" style="left:52px;top:99px;width:1840px;height:1px;background:#a8a8a8"></div>
<div class="a" style="left:53px;top:100px;width:1839px;height:1px;background:#5a5a5a"></div>
<div class="a" style="left:52px;top:99px;width:1px;height:714px;background:#a8a8a8"></div>
<div class="a" style="left:53px;top:100px;width:1px;height:713px;background:#5a5a5a"></div>
<svg style="left:0;top:0" width="1920" height="1080" viewBox="0 0 1920 1080" shape-rendering="crispEdges"><line x1="515.5" y1="331.5" x2="524.5" y2="331.5" stroke="#0ff" stroke-width="1"/><line x1="520.5" y1="327.0" x2="520.5" y2="336.0" stroke="#0ff" stroke-width="1"/><line x1="453.5" y1="394.5" x2="462.5" y2="394.5" stroke="#0ff" stroke-width="1"/><line x1="458.5" y1="390.0" x2="458.5" y2="399.0" stroke="#0ff" stroke-width="1"/><line x1="515.5" y1="394.5" x2="524.5" y2="394.5" stroke="#0ff" stroke-width="1"/><line x1="520.5" y1="390.0" x2="520.5" y2="399.0" stroke="#0ff" stroke-width="1"/><line x1="578.5" y1="394.5" x2="587.5" y2="394.5" stroke="#0ff" stroke-width="1"/><line x1="583.5" y1="390.0" x2="583.5" y2="399.0" stroke="#0ff" stroke-width="1"/><line x1="640.5" y1="394.5" x2="649.5" y2="394.5" stroke="#0ff" stroke-width="1"/><line x1="645.5" y1="390.0" x2="645.5" y2="399.0" stroke="#0ff" stroke-width="1"/><line x1="702.5" y1="394.5" x2="711.5" y2="394.5" stroke="#0ff" stroke-width="1"/><line x1="707.5" y1="390.0" x2="707.5" y2="399.0" stroke="#0ff" stroke-width="1"/><line x1="453.5" y1="456.5" x2="462.5" y2="456.5" stroke="#0ff" stroke-width="1"/><line x1="458.5" y1="452.0" x2="458.5" y2="461.0" stroke="#0ff" stroke-width="1"/><line x1="515.5" y1="456.5" x2="524.5" y2="456.5" stroke="#0ff" stroke-width="1"/><line x1="520.5" y1="452.0" x2="520.5" y2="461.0" stroke="#0ff" stroke-width="1"/><line x1="640.5" y1="456.5" x2="649.5" y2="456.5" stroke="#0ff" stroke-width="1"/><line x1="645.5" y1="452.0" x2="645.5" y2="461.0" stroke="#0ff" stroke-width="1"/><line x1="702.5" y1="456.5" x2="711.5" y2="456.5" stroke="#0ff" stroke-width="1"/><line x1="707.5" y1="452.0" x2="707.5" y2="461.0" stroke="#0ff" stroke-width="1"/><line x1="765.5" y1="456.5" x2="774.5" y2="456.5" stroke="#0ff" stroke-width="1"/><line x1="770.5" y1="452.0" x2="770.5" y2="461.0" stroke="#0ff" stroke-width="1"/><line x1="453.5" y1="518.5" x2="462.5" y2="518.5" stroke="#0ff" stroke-width="1"/><line x1="458.5" y1="514.0" x2="458.5" y2="523.0" stroke="#0ff" stroke-width="1"/><line x1="515.5" y1="518.5" x2="524.5" y2="518.5" stroke="#0ff" stroke-width="1"/><line x1="520.5" y1="514.0" x2="520.5" y2="523.0" stroke="#0ff" stroke-width="1"/><line x1="578.5" y1="518.5" x2="587.5" y2="518.5" stroke="#0ff" stroke-width="1"/><line x1="583.5" y1="514.0" x2="583.5" y2="523.0" stroke="#0ff" stroke-width="1"/><line x1="640.5" y1="518.5" x2="649.5" y2="518.5" stroke="#0ff" stroke-width="1"/><line x1="645.5" y1="514.0" x2="645.5" y2="523.0" stroke="#0ff" stroke-width="1"/><line x1="765.5" y1="518.5" x2="774.5" y2="518.5" stroke="#0ff" stroke-width="1"/><line x1="770.5" y1="514.0" x2="770.5" y2="523.0" stroke="#0ff" stroke-width="1"/><line x1="578.5" y1="581.5" x2="587.5" y2="581.5" stroke="#0ff" stroke-width="1"/><line x1="583.5" y1="577.0" x2="583.5" y2="586.0" stroke="#0ff" stroke-width="1"/><line x1="640.5" y1="581.5" x2="649.5" y2="581.5" stroke="#0ff" stroke-width="1"/><line x1="645.5" y1="577.0" x2="645.5" y2="586.0" stroke="#0ff" stroke-width="1"/><line x1="702.5" y1="581.5" x2="711.5" y2="581.5" stroke="#0ff" stroke-width="1"/><line x1="707.5" y1="577.0" x2="707.5" y2="586.0" stroke="#0ff" stroke-width="1"/><line x1="702.5" y1="643.5" x2="711.5" y2="643.5" stroke="#0ff" stroke-width="1"/><line x1="707.5" y1="639.0" x2="707.5" y2="648.0" stroke="#0ff" stroke-width="1"/><rect x="522.0" y="392.0" width="9.0" height="3.0" fill="#fff"/><rect x="519.0" y="396.0" width="8.0" height="3.0" fill="#fff"/><rect x="709.0" y="454.0" width="9.0" height="3.0" fill="#fff"/><rect x="706.0" y="458.0" width="8.0" height="3.0" fill="#fff"/><rect x="460.0" y="516.0" width="9.0" height="3.0" fill="#fff"/><rect x="457.0" y="520.0" width="8.0" height="3.0" fill="#fff"/><rect x="709.0" y="579.0" width="9.0" height="3.0" fill="#fff"/><rect x="706.0" y="583.0" width="8.0" height="3.0" fill="#fff"/><clipPath id="stripc"><path d="M441 462 L446 440 L458 420 L474 402 L520 412 L600 440 L700 476 L760 494 L763 525 L755 578 L720 576 L690 566 L600 534 L560 518 L485 494 L452 484Z"/></clipPath><g clip-path="url(#stripc)"><path d="M470 404 L471.5 402 L473 404Z" fill="#00ff00"/><rect x="474" y="399" width="6" height="2" fill="#fff"/><path d="M470 415 L471.5 413 L473 415Z" fill="#00ff00"/><rect x="472" y="410" width="5" height="2" fill="#fff"/><path d="M466 425 L467.5 423 L469 425Z" fill="#00ff00"/><rect x="470" y="420" width="5" height="2" fill="#fff"/><path d="M459 433 L460.5 431 L462 433Z" fill="#00ff00"/><rect x="462" y="426" width="6" height="2" fill="#fff"/><path d="M460 449 L461.5 447 L463 449Z" fill="#00ff00"/><rect x="463" y="443" width="5" height="2" fill="#fff"/><path d="M459 457 L460.5 455 L462 457Z" fill="#00ff00"/><rect x="461" y="451" width="5" height="2" fill="#fff"/><path d="M458 469 L459.5 467 L461 469Z" fill="#00ff00"/><rect x="460" y="464" width="7" height="2" fill="#fff"/><path d="M451 481 L452.5 479 L454 481Z" fill="#00ff00"/><rect x="455" y="475" width="6" height="2" fill="#fff"/><path d="M478 405 L479.5 403 L481 405Z" fill="#00ff00"/><rect x="480" y="398" width="5" height="2" fill="#fff"/><path d="M475 417 L476.5 415 L478 417Z" fill="#00ff00"/><rect x="479" y="412" width="6" height="2" fill="#fff"/><rect x="480" y="422" width="5" height="2" fill="#fff"/><path d="M471 439 L472.5 437 L474 439Z" fill="#00ff00"/><rect x="473" y="434" width="7" height="2" fill="#fff"/><path d="M469 453 L470.5 451 L472 453Z" fill="#00ff00"/><rect x="471" y="448" width="6" height="2" fill="#fff"/><path d="M465 460 L466.5 458 L468 460Z" fill="#00ff00"/><rect x="469" y="455" width="7" height="2" fill="#fff"/><path d="M464 469 L465.5 467 L467 469Z" fill="#00ff00"/><rect x="466" y="464" width="6" height="2" fill="#fff"/><path d="M465 483 L466.5 481 L468 483Z" fill="#00ff00"/><rect x="467" y="478" width="6" height="2" fill="#fff"/><path d="M490 412 L491.5 410 L493 412Z" fill="#00ff00"/><rect x="493" y="405" width="6" height="2" fill="#fff"/><path d="M492 427 L493.5 425 L495 427Z" fill="#00ff00"/><rect x="496" y="420" width="5" height="2" fill="#fff"/><path d="M485 436 L486.5 434 L488 436Z" fill="#00ff00"/><rect x="488" y="431" width="5" height="2" fill="#fff"/><rect x="483" y="435" width="6" height="2" fill="#fff"/><path d="M483 457 L484.5 455 L486 457Z" fill="#00ff00"/><rect x="485" y="451" width="6" height="2" fill="#fff"/><path d="M478 477 L479.5 475 L481 477Z" fill="#00ff00"/><rect x="475" y="482" width="6" height="2" fill="#fff"/><rect x="504" y="410" width="5" height="2" fill="#fff"/><path d="M502 425 L503.5 423 L505 425Z" fill="#00ff00"/><rect x="506" y="420" width="6" height="2" fill="#fff"/><path d="M501 439 L502.5 437 L504 439Z" fill="#00ff00"/><rect x="504" y="433" width="5" height="2" fill="#fff"/><path d="M496 448 L497.5 446 L499 448Z" fill="#00ff00"/><rect x="500" y="443" width="7" height="2" fill="#fff"/><rect x="497" y="453" width="6" height="2" fill="#fff"/><rect x="493" y="465" width="7" height="2" fill="#fff"/><path d="M490 478 L491.5 476 L493 478Z" fill="#00ff00"/><path d="M489 491 L490.5 489 L492 491Z" fill="#00ff00"/><rect x="492" y="485" width="5" height="2" fill="#fff"/><path d="M515 423 L516.5 421 L518 423Z" fill="#00ff00"/><rect x="518" y="418" width="7" height="2" fill="#fff"/><path d="M511 429 L512.5 427 L514 429Z" fill="#00ff00"/><path d="M511 439 L512.5 437 L514 439Z" fill="#00ff00"/><rect x="515" y="432" width="6" height="2" fill="#fff"/><path d="M508 450 L509.5 448 L511 450Z" fill="#00ff00"/><rect x="511" y="445" width="5" height="2" fill="#fff"/><path d="M507 461 L508.5 459 L510 461Z" fill="#00ff00"/><path d="M500 469 L501.5 467 L503 469Z" fill="#00ff00"/><rect x="502" y="462" width="6" height="2" fill="#fff"/><path d="M498 483 L499.5 481 L501 483Z" fill="#00ff00"/><rect x="502" y="478" width="6" height="2" fill="#fff"/><rect x="497" y="490" width="6" height="2" fill="#fff"/><path d="M521 425 L522.5 423 L524 425Z" fill="#00ff00"/><rect x="525" y="420" width="7" height="2" fill="#fff"/><path d="M523 435 L524.5 433 L526 435Z" fill="#00ff00"/><rect x="526" y="428" width="6" height="2" fill="#fff"/><rect x="519" y="440" width="5" height="2" fill="#fff"/><path d="M522 456 L523.5 454 L525 456Z" fill="#00ff00"/><path d="M513 477 L514.5 475 L516 477Z" fill="#00ff00"/><rect x="515" y="471" width="5" height="2" fill="#fff"/><path d="M509 485 L510.5 483 L512 485Z" fill="#00ff00"/><rect x="513" y="478" width="7" height="2" fill="#fff"/><path d="M512 499 L513.5 497 L515 499Z" fill="#00ff00"/><rect x="516" y="492" width="6" height="2" fill="#fff"/><path d="M539 427 L540.5 425 L542 427Z" fill="#00ff00"/><rect x="535" y="433" width="6" height="2" fill="#fff"/><path d="M533 446 L534.5 444 L536 446Z" fill="#00ff00"/><rect x="535" y="439" width="5" height="2" fill="#fff"/><path d="M530 458 L531.5 456 L533 458Z" fill="#00ff00"/><rect x="534" y="453" width="5" height="2" fill="#fff"/><path d="M531 470 L532.5 468 L534 470Z" fill="#00ff00"/><rect x="533" y="464" width="7" height="2" fill="#fff"/><rect x="525" y="474" width="6" height="2" fill="#fff"/><path d="M523 487 L524.5 485 L526 487Z" fill="#00ff00"/><path d="M545 431 L546.5 429 L548 431Z" fill="#00ff00"/><rect x="549" y="426" width="6" height="2" fill="#fff"/><path d="M546 443 L547.5 441 L549 443Z" fill="#00ff00"/><rect x="550" y="436" width="6" height="2" fill="#fff"/><path d="M543 454 L544.5 452 L546 454Z" fill="#00ff00"/><rect x="547" y="447" width="6" height="2" fill="#fff"/><rect x="541" y="458" width="6" height="2" fill="#fff"/><path d="M533 494 L534.5 492 L536 494Z" fill="#00ff00"/><rect x="535" y="488" width="5" height="2" fill="#fff"/><path d="M528 505 L529.5 503 L531 505Z" fill="#00ff00"/><rect x="532" y="498" width="6" height="2" fill="#fff"/><path d="M558 435 L559.5 433 L561 435Z" fill="#00ff00"/><rect x="560" y="428" width="7" height="2" fill="#fff"/><path d="M554 441 L555.5 439 L557 441Z" fill="#00ff00"/><path d="M555 467 L556.5 465 L558 467Z" fill="#00ff00"/><rect x="559" y="461" width="7" height="2" fill="#fff"/><path d="M548 475 L549.5 473 L551 475Z" fill="#00ff00"/><rect x="551" y="469" width="6" height="2" fill="#fff"/><path d="M549 488 L550.5 486 L552 488Z" fill="#00ff00"/><rect x="551" y="482" width="5" height="2" fill="#fff"/><path d="M547 501 L548.5 499 L550 501Z" fill="#00ff00"/><rect x="551" y="496" width="6" height="2" fill="#fff"/><path d="M546 508 L547.5 506 L549 508Z" fill="#00ff00"/><rect x="549" y="503" width="6" height="2" fill="#fff"/><path d="M572 440 L573.5 438 L575 440Z" fill="#00ff00"/><rect x="576" y="435" width="5" height="2" fill="#fff"/><path d="M567 464 L568.5 462 L570 464Z" fill="#00ff00"/><rect x="571" y="458" width="6" height="2" fill="#fff"/><path d="M561 468 L562.5 466 L564 468Z" fill="#00ff00"/><rect x="564" y="461" width="6" height="2" fill="#fff"/><path d="M562 483 L563.5 481 L565 483Z" fill="#00ff00"/><rect x="566" y="478" width="6" height="2" fill="#fff"/><path d="M558 491 L559.5 489 L561 491Z" fill="#00ff00"/><rect x="561" y="485" width="6" height="2" fill="#fff"/><rect x="562" y="496" width="7" height="2" fill="#fff"/><path d="M558 510 L559.5 508 L561 510Z" fill="#00ff00"/><rect x="560" y="504" width="7" height="2" fill="#fff"/><path d="M584 445 L585.5 443 L587 445Z" fill="#00ff00"/><rect x="587" y="439" width="6" height="2" fill="#fff"/><path d="M578 453 L579.5 451 L581 453Z" fill="#00ff00"/><rect x="582" y="447" width="6" height="2" fill="#fff"/><path d="M572 463 L573.5 461 L575 463Z" fill="#00ff00"/><rect x="576" y="457" width="5" height="2" fill="#fff"/><rect x="577" y="490" width="7" height="2" fill="#fff"/><path d="M564 508 L565.5 506 L567 508Z" fill="#00ff00"/><rect x="567" y="502" width="5" height="2" fill="#fff"/><path d="M564 512 L565.5 510 L567 512Z" fill="#00ff00"/><rect x="568" y="506" width="7" height="2" fill="#fff"/><path d="M592 446 L593.5 444 L595 446Z" fill="#00ff00"/><rect x="594" y="440" width="6" height="2" fill="#fff"/><path d="M588 452 L589.5 450 L591 452Z" fill="#00ff00"/><rect x="591" y="446" width="6" height="2" fill="#fff"/><path d="M588 468 L589.5 466 L591 468Z" fill="#00ff00"/><rect x="590" y="463" width="6" height="2" fill="#fff"/><path d="M585 478 L586.5 476 L588 478Z" fill="#00ff00"/><rect x="587" y="472" width="6" height="2" fill="#fff"/><path d="M581 510 L582.5 508 L584 510Z" fill="#00ff00"/><rect x="583" y="504" width="6" height="2" fill="#fff"/><path d="M578 517 L579.5 515 L581 517Z" fill="#00ff00"/><rect x="582" y="512" width="7" height="2" fill="#fff"/><path d="M602 446 L603.5 444 L605 446Z" fill="#00ff00"/><rect x="606" y="440" width="6" height="2" fill="#fff"/><path d="M601 461 L602.5 459 L604 461Z" fill="#00ff00"/><rect x="603" y="455" width="6" height="2" fill="#fff"/><path d="M596 466 L597.5 464 L599 466Z" fill="#00ff00"/><rect x="599" y="461" width="5" height="2" fill="#fff"/><path d="M594 483 L595.5 481 L597 483Z" fill="#00ff00"/><rect x="598" y="477" width="6" height="2" fill="#fff"/><path d="M598 490 L599.5 488 L601 490Z" fill="#00ff00"/><rect x="594" y="495" width="6" height="2" fill="#fff"/><path d="M591 511 L592.5 509 L594 511Z" fill="#00ff00"/><rect x="593" y="505" width="6" height="2" fill="#fff"/><path d="M585 524 L586.5 522 L588 524Z" fill="#00ff00"/><rect x="588" y="518" width="6" height="2" fill="#fff"/><path d="M616 453 L617.5 451 L619 453Z" fill="#00ff00"/><path d="M611 459 L612.5 457 L614 459Z" fill="#00ff00"/><rect x="613" y="452" width="7" height="2" fill="#fff"/><path d="M606 473 L607.5 471 L609 473Z" fill="#00ff00"/><rect x="610" y="468" width="6" height="2" fill="#fff"/><path d="M604 484 L605.5 482 L607 484Z" fill="#00ff00"/><rect x="606" y="477" width="6" height="2" fill="#fff"/><path d="M605 498 L606.5 496 L608 498Z" fill="#00ff00"/><rect x="608" y="491" width="6" height="2" fill="#fff"/><path d="M604 506 L605.5 504 L607 506Z" fill="#00ff00"/><path d="M602 531 L603.5 529 L605 531Z" fill="#00ff00"/><rect x="606" y="526" width="5" height="2" fill="#fff"/><path d="M624 455 L625.5 453 L627 455Z" fill="#00ff00"/><path d="M622 464 L623.5 462 L625 464Z" fill="#00ff00"/><rect x="624" y="458" width="6" height="2" fill="#fff"/><path d="M622 485 L623.5 483 L625 485Z" fill="#00ff00"/><rect x="624" y="480" width="6" height="2" fill="#fff"/><path d="M615 496 L616.5 494 L618 496Z" fill="#00ff00"/><rect x="617" y="490" width="7" height="2" fill="#fff"/><path d="M612 511 L613.5 509 L615 511Z" fill="#00ff00"/><rect x="617" y="514" width="7" height="2" fill="#fff"/><path d="M614 531 L615.5 529 L617 531Z" fill="#00ff00"/><path d="M639 463 L640.5 461 L642 463Z" fill="#00ff00"/><rect x="641" y="458" width="7" height="2" fill="#fff"/><path d="M637 471 L638.5 469 L640 471Z" fill="#00ff00"/><path d="M627 493 L628.5 491 L630 493Z" fill="#00ff00"/><rect x="631" y="488" width="5" height="2" fill="#fff"/><path d="M625 505 L626.5 503 L628 505Z" fill="#00ff00"/><rect x="629" y="498" width="5" height="2" fill="#fff"/><path d="M627 525 L628.5 523 L630 525Z" fill="#00ff00"/><rect x="629" y="518" width="5" height="2" fill="#fff"/><rect x="649" y="458" width="6" height="2" fill="#fff"/><path d="M640 481 L641.5 479 L643 481Z" fill="#00ff00"/><rect x="642" y="474" width="7" height="2" fill="#fff"/><path d="M638 493 L639.5 491 L641 493Z" fill="#00ff00"/><rect x="641" y="488" width="6" height="2" fill="#fff"/><rect x="646" y="499" width="5" height="2" fill="#fff"/><path d="M636 514 L637.5 512 L639 514Z" fill="#00ff00"/><path d="M636 530 L637.5 528 L639 530Z" fill="#00ff00"/><rect x="638" y="523" width="5" height="2" fill="#fff"/><path d="M631 539 L632.5 537 L634 539Z" fill="#00ff00"/><rect x="634" y="532" width="5" height="2" fill="#fff"/><path d="M655 462 L656.5 460 L658 462Z" fill="#00ff00"/><rect x="658" y="456" width="6" height="2" fill="#fff"/><path d="M657 480 L658.5 478 L660 480Z" fill="#00ff00"/><rect x="660" y="473" width="5" height="2" fill="#fff"/><path d="M656 490 L657.5 488 L659 490Z" fill="#00ff00"/><rect x="660" y="483" width="5" height="2" fill="#fff"/><path d="M651 496 L652.5 494 L654 496Z" fill="#00ff00"/><rect x="653" y="489" width="6" height="2" fill="#fff"/><path d="M653 513 L654.5 511 L656 513Z" fill="#00ff00"/><rect x="656" y="506" width="6" height="2" fill="#fff"/><path d="M648 520 L649.5 518 L651 520Z" fill="#00ff00"/><path d="M647 533 L648.5 531 L650 533Z" fill="#00ff00"/><path d="M667 470 L668.5 468 L670 470Z" fill="#00ff00"/><rect x="670" y="474" width="5" height="2" fill="#fff"/><path d="M665 500 L666.5 498 L668 500Z" fill="#00ff00"/><path d="M660 513 L661.5 511 L663 513Z" fill="#00ff00"/><rect x="662" y="507" width="5" height="2" fill="#fff"/><rect x="663" y="519" width="7" height="2" fill="#fff"/><path d="M659 536 L660.5 534 L662 536Z" fill="#00ff00"/><rect x="661" y="531" width="7" height="2" fill="#fff"/><path d="M654 544 L655.5 542 L657 544Z" fill="#00ff00"/><rect x="657" y="539" width="5" height="2" fill="#fff"/><path d="M681 477 L682.5 475 L684 477Z" fill="#00ff00"/><rect x="684" y="471" width="7" height="2" fill="#fff"/><path d="M680 485 L681.5 483 L683 485Z" fill="#00ff00"/><rect x="680" y="488" width="7" height="2" fill="#fff"/><path d="M675 503 L676.5 501 L678 503Z" fill="#00ff00"/><rect x="678" y="496" width="7" height="2" fill="#fff"/><path d="M674 519 L675.5 517 L677 519Z" fill="#00ff00"/><rect x="676" y="513" width="6" height="2" fill="#fff"/><path d="M671 539 L672.5 537 L674 539Z" fill="#00ff00"/><rect x="673" y="534" width="6" height="2" fill="#fff"/><path d="M671 550 L672.5 548 L674 550Z" fill="#00ff00"/><rect x="675" y="545" width="5" height="2" fill="#fff"/><path d="M687 479 L688.5 477 L690 479Z" fill="#00ff00"/><path d="M686 485 L687.5 483 L689 485Z" fill="#00ff00"/><rect x="689" y="478" width="7" height="2" fill="#fff"/><path d="M685 500 L686.5 498 L688 500Z" fill="#00ff00"/><rect x="688" y="494" width="6" height="2" fill="#fff"/><path d="M686 513 L687.5 511 L689 513Z" fill="#00ff00"/><rect x="689" y="506" width="5" height="2" fill="#fff"/><path d="M682 523 L683.5 521 L685 523Z" fill="#00ff00"/><rect x="686" y="516" width="6" height="2" fill="#fff"/><rect x="686" y="523" width="6" height="2" fill="#fff"/><rect x="688" y="536" width="5" height="2" fill="#fff"/><path d="M677 555 L678.5 553 L680 555Z" fill="#00ff00"/><rect x="681" y="550" width="6" height="2" fill="#fff"/><rect x="706" y="475" width="6" height="2" fill="#fff"/><path d="M702 491 L703.5 489 L705 491Z" fill="#00ff00"/><path d="M698 503 L699.5 501 L701 503Z" fill="#00ff00"/><rect x="701" y="496" width="6" height="2" fill="#fff"/><rect x="699" y="508" width="5" height="2" fill="#fff"/><path d="M693 527 L694.5 525 L696 527Z" fill="#00ff00"/><rect x="697" y="521" width="5" height="2" fill="#fff"/><path d="M698 536 L699.5 534 L701 536Z" fill="#00ff00"/><rect x="701" y="530" width="7" height="2" fill="#fff"/><path d="M695 547 L696.5 545 L698 547Z" fill="#00ff00"/><rect x="699" y="540" width="6" height="2" fill="#fff"/><path d="M712 486 L713.5 484 L715 486Z" fill="#00ff00"/><rect x="716" y="481" width="6" height="2" fill="#fff"/><path d="M712 494 L713.5 492 L715 494Z" fill="#00ff00"/><rect x="716" y="487" width="5" height="2" fill="#fff"/><path d="M710 510 L711.5 508 L713 510Z" fill="#00ff00"/><rect x="713" y="504" width="7" height="2" fill="#fff"/><path d="M704 525 L705.5 523 L707 525Z" fill="#00ff00"/><rect x="708" y="520" width="5" height="2" fill="#fff"/><path d="M704 535 L705.5 533 L707 535Z" fill="#00ff00"/><rect x="707" y="528" width="7" height="2" fill="#fff"/><path d="M700 551 L701.5 549 L703 551Z" fill="#00ff00"/><rect x="704" y="544" width="7" height="2" fill="#fff"/><path d="M699 559 L700.5 557 L702 559Z" fill="#00ff00"/><rect x="723" y="481" width="5" height="2" fill="#fff"/><path d="M719 498 L720.5 496 L722 498Z" fill="#00ff00"/><rect x="722" y="492" width="5" height="2" fill="#fff"/><rect x="728" y="507" width="5" height="2" fill="#fff"/><rect x="723" y="512" width="6" height="2" fill="#fff"/><path d="M715 530 L716.5 528 L718 530Z" fill="#00ff00"/><rect x="719" y="523" width="6" height="2" fill="#fff"/><path d="M717 542 L718.5 540 L720 542Z" fill="#00ff00"/><path d="M713 551 L714.5 549 L716 551Z" fill="#00ff00"/><rect x="715" y="545" width="6" height="2" fill="#fff"/><path d="M714 566 L715.5 564 L717 566Z" fill="#00ff00"/><rect x="716" y="560" width="6" height="2" fill="#fff"/><path d="M731 506 L732.5 504 L734 506Z" fill="#00ff00"/><rect x="735" y="500" width="6" height="2" fill="#fff"/><rect x="732" y="505" width="5" height="2" fill="#fff"/><path d="M727 522 L728.5 520 L730 522Z" fill="#00ff00"/><path d="M728 537 L729.5 535 L731 537Z" fill="#00ff00"/><rect x="730" y="531" width="5" height="2" fill="#fff"/><path d="M726 546 L727.5 544 L729 546Z" fill="#00ff00"/><rect x="729" y="539" width="6" height="2" fill="#fff"/><path d="M727 557 L728.5 555 L730 557Z" fill="#00ff00"/><rect x="729" y="551" width="7" height="2" fill="#fff"/><path d="M725 567 L726.5 565 L728 567Z" fill="#00ff00"/><rect x="728" y="560" width="6" height="2" fill="#fff"/><path d="M743 498 L744.5 496 L746 498Z" fill="#00ff00"/><rect x="747" y="492" width="5" height="2" fill="#fff"/><path d="M748 506 L749.5 504 L751 506Z" fill="#00ff00"/><path d="M746 517 L747.5 515 L749 517Z" fill="#00ff00"/><rect x="749" y="511" width="5" height="2" fill="#fff"/><path d="M741 532 L742.5 530 L744 532Z" fill="#00ff00"/><rect x="744" y="527" width="7" height="2" fill="#fff"/><path d="M743 539 L744.5 537 L746 539Z" fill="#00ff00"/><rect x="746" y="534" width="7" height="2" fill="#fff"/><path d="M740 552 L741.5 550 L743 552Z" fill="#00ff00"/><rect x="743" y="547" width="6" height="2" fill="#fff"/><path d="M741 565 L742.5 563 L744 565Z" fill="#00ff00"/><path d="M735 572 L736.5 570 L738 572Z" fill="#00ff00"/><rect x="738" y="566" width="6" height="2" fill="#fff"/><path d="M755 501 L756.5 499 L758 501Z" fill="#00ff00"/><rect x="758" y="496" width="6" height="2" fill="#fff"/><path d="M758 512 L759.5 510 L761 512Z" fill="#00ff00"/><rect x="761" y="507" width="7" height="2" fill="#fff"/><path d="M757 522 L758.5 520 L760 522Z" fill="#00ff00"/><rect x="761" y="516" width="6" height="2" fill="#fff"/><path d="M753 541 L754.5 539 L756 541Z" fill="#00ff00"/><rect x="757" y="535" width="5" height="2" fill="#fff"/><path d="M749 553 L750.5 551 L752 553Z" fill="#00ff00"/><rect x="753" y="546" width="6" height="2" fill="#fff"/><path d="M751 574 L752.5 572 L754 574Z" fill="#00ff00"/><rect x="753" y="569" width="6" height="2" fill="#fff"/><line x1="490.2" y1="411.7" x2="503.1" y2="454.8" stroke="#00ff00" stroke-width="1"/><line x1="495.5" y1="412.7" x2="509.3" y2="458.7" stroke="#00ff00" stroke-width="1"/><line x1="501.7" y1="414.5" x2="513.1" y2="452.5" stroke="#00ff00" stroke-width="1"/><line x1="507.0" y1="416.1" x2="519.7" y2="458.3" stroke="#00ff00" stroke-width="1"/><line x1="512.5" y1="417.5" x2="523.0" y2="452.6" stroke="#00ff00" stroke-width="1"/><line x1="518.2" y1="421.9" x2="528.9" y2="457.7" stroke="#00ff00" stroke-width="1"/><line x1="524.7" y1="424.4" x2="537.2" y2="466.1" stroke="#00ff00" stroke-width="1"/><line x1="529.9" y1="426.5" x2="544.3" y2="474.4" stroke="#00ff00" stroke-width="1"/><line x1="535.5" y1="425.9" x2="548.1" y2="468.0" stroke="#00ff00" stroke-width="1"/><line x1="542.8" y1="428.9" x2="556.4" y2="474.4" stroke="#00ff00" stroke-width="1"/><line x1="547.5" y1="431.8" x2="559.3" y2="471.0" stroke="#00ff00" stroke-width="1"/><line x1="553.5" y1="434.0" x2="567.7" y2="481.4" stroke="#00ff00" stroke-width="1"/><line x1="560.3" y1="435.5" x2="572.5" y2="476.2" stroke="#00ff00" stroke-width="1"/><line x1="565.8" y1="437.5" x2="580.0" y2="484.8" stroke="#00ff00" stroke-width="1"/><line x1="498.0" y1="410.0" x2="507.1" y2="434.1" stroke="#00ff00" stroke-width="1"/><line x1="478.1" y1="412.4" x2="484.2" y2="434.9" stroke="#00ff00" stroke-width="1"/><line x1="502.9" y1="443.8" x2="510.0" y2="468.2" stroke="#00ff00" stroke-width="1"/><line x1="484.7" y1="430.3" x2="493.8" y2="459.1" stroke="#00ff00" stroke-width="1"/><line x1="504.6" y1="406.9" x2="516.3" y2="421.1" stroke="#00ff00" stroke-width="1"/><line x1="471.5" y1="416.4" x2="483.3" y2="446.3" stroke="#00ff00" stroke-width="1"/><line x1="474.2" y1="418.2" x2="480.4" y2="440.0" stroke="#00ff00" stroke-width="1"/><line x1="486.9" y1="419.9" x2="495.4" y2="446.3" stroke="#00ff00" stroke-width="1"/><line x1="499.4" y1="416.3" x2="508.5" y2="439.5" stroke="#00ff00" stroke-width="1"/><line x1="496.8" y1="444.2" x2="505.9" y2="468.7" stroke="#00ff00" stroke-width="1"/><line x1="489.1" y1="437.0" x2="496.3" y2="452.2" stroke="#00ff00" stroke-width="1"/><line x1="473.7" y1="442.3" x2="481.8" y2="463.1" stroke="#00ff00" stroke-width="1"/><line x1="474.2" y1="417.9" x2="480.4" y2="440.1" stroke="#00ff00" stroke-width="1"/><line x1="475.0" y1="430.0" x2="483.2" y2="446.1" stroke="#00ff00" stroke-width="1"/><line x1="486.9" y1="419.6" x2="495.0" y2="432.6" stroke="#00ff00" stroke-width="1"/><line x1="472.3" y1="440.7" x2="480.7" y2="454.1" stroke="#00ff00" stroke-width="1"/><line x1="475.5" y1="429.3" x2="497.4" y2="421.7" stroke="#00ff00" stroke-width="1"/><line x1="496.0" y1="429.4" x2="511.0" y2="416.9" stroke="#00ff00" stroke-width="1"/><line x1="481.9" y1="412.3" x2="498.5" y2="401.1" stroke="#00ff00" stroke-width="1"/><line x1="488.7" y1="421.1" x2="510.0" y2="408.2" stroke="#00ff00" stroke-width="1"/><line x1="499.8" y1="427.7" x2="519.8" y2="415.9" stroke="#00ff00" stroke-width="1"/><line x1="475.3" y1="411.1" x2="487.3" y2="404.1" stroke="#00ff00" stroke-width="1"/><line x1="472.2" y1="424.4" x2="491.3" y2="415.9" stroke="#00ff00" stroke-width="1"/><line x1="485.4" y1="410.4" x2="497.9" y2="396.7" stroke="#00ff00" stroke-width="1"/><polyline points="474.0,405.0 482.0,420.0 490.0,440.0 495.0,455.0" fill="none" stroke="#00ff00" stroke-width="2"/><polyline points="485.0,428.0 500.0,418.0 515.0,412.0" fill="none" stroke="#00ff00" stroke-width="2"/><polyline points="458.0,476.0 470.0,470.0 480.0,466.0" fill="none" stroke="#00ff00" stroke-width="2"/><polyline points="449.0,452.0 460.0,445.0 475.0,440.0 485.0,450.0 495.0,470.0 500.0,490.0" fill="none" stroke="#00ff00" stroke-width="1"/><polyline points="462.0,420.0 475.0,430.0 480.0,445.0 478.0,470.0" fill="none" stroke="#00ff00" stroke-width="1"/><line x1="647.1" y1="474.3" x2="682.7" y2="558.8" stroke="#00ff00" stroke-width="1"/><line x1="727.2" y1="495.8" x2="763.7" y2="580.0" stroke="#00ff00" stroke-width="1"/><line x1="727.8" y1="519.0" x2="749.7" y2="564.6" stroke="#00ff00" stroke-width="1"/><line x1="689.0" y1="495.2" x2="714.1" y2="549.0" stroke="#00ff00" stroke-width="1"/><line x1="648.2" y1="476.6" x2="662.2" y2="529.1" stroke="#00ff00" stroke-width="1"/><line x1="685.7" y1="492.2" x2="707.5" y2="576.8" stroke="#00ff00" stroke-width="1"/><line x1="716.7" y1="490.6" x2="742.4" y2="545.9" stroke="#00ff00" stroke-width="1"/><line x1="683.6" y1="469.3" x2="707.1" y2="527.7" stroke="#00ff00" stroke-width="1"/><line x1="667.8" y1="489.7" x2="694.3" y2="559.7" stroke="#00ff00" stroke-width="1"/><line x1="667.8" y1="464.4" x2="679.9" y2="512.3" stroke="#00ff00" stroke-width="1"/><line x1="696.0" y1="470.1" x2="714.4" y2="537.7" stroke="#00ff00" stroke-width="1"/><line x1="681.1" y1="485.9" x2="699.4" y2="578.3" stroke="#00ff00" stroke-width="1"/><line x1="743.4" y1="498.2" x2="756.5" y2="579.7" stroke="#00ff00" stroke-width="1"/><line x1="754.6" y1="506.2" x2="773.5" y2="599.1" stroke="#00ff00" stroke-width="1"/><line x1="689.7" y1="495.4" x2="700.8" y2="545.2" stroke="#00ff00" stroke-width="1"/><line x1="718.0" y1="514.3" x2="729.0" y2="572.0" stroke="#00ff00" stroke-width="1"/><line x1="682.5" y1="504.3" x2="699.9" y2="552.4" stroke="#00ff00" stroke-width="1"/><line x1="686.7" y1="492.0" x2="705.0" y2="543.7" stroke="#00ff00" stroke-width="1"/><line x1="741.7" y1="518.5" x2="764.9" y2="593.1" stroke="#00ff00" stroke-width="1"/><line x1="710.3" y1="479.0" x2="743.2" y2="565.1" stroke="#00ff00" stroke-width="1"/><line x1="694.8" y1="495.6" x2="711.6" y2="558.6" stroke="#00ff00" stroke-width="1"/><line x1="670.7" y1="485.0" x2="693.3" y2="556.5" stroke="#00ff00" stroke-width="1"/><line x1="648.8" y1="478.8" x2="671.1" y2="543.4" stroke="#00ff00" stroke-width="1"/><line x1="709.0" y1="510.7" x2="723.4" y2="559.1" stroke="#00ff00" stroke-width="1"/><line x1="753.8" y1="517.9" x2="776.7" y2="575.1" stroke="#00ff00" stroke-width="1"/><line x1="754.9" y1="505.2" x2="769.7" y2="592.9" stroke="#00ff00" stroke-width="1"/><line x1="754.6" y1="508.6" x2="777.8" y2="561.4" stroke="#00ff00" stroke-width="1"/><line x1="715.0" y1="512.9" x2="751.2" y2="598.5" stroke="#00ff00" stroke-width="1"/><line x1="699.5" y1="510.0" x2="719.1" y2="553.6" stroke="#00ff00" stroke-width="1"/><line x1="725.3" y1="489.4" x2="750.0" y2="573.8" stroke="#00ff00" stroke-width="1"/><line x1="608.7" y1="476.1" x2="625.0" y2="522.0" stroke="#00ff00" stroke-width="1"/><line x1="621.0" y1="454.8" x2="646.9" y2="511.5" stroke="#00ff00" stroke-width="1"/><line x1="608.6" y1="456.1" x2="638.8" y2="520.1" stroke="#00ff00" stroke-width="1"/><line x1="628.0" y1="472.4" x2="658.8" y2="539.5" stroke="#00ff00" stroke-width="1"/><line x1="582.5" y1="451.4" x2="595.8" y2="494.4" stroke="#00ff00" stroke-width="1"/><line x1="594.3" y1="471.3" x2="615.3" y2="536.3" stroke="#00ff00" stroke-width="1"/><line x1="584.7" y1="452.8" x2="612.4" y2="518.3" stroke="#00ff00" stroke-width="1"/><polyline points="590.7,444.0 590.0,478.0 590.0,510.0" fill="none" stroke="#00ff00" stroke-width="1"/><polyline points="582.0,518.0 595.0,505.0 607.0,489.0 620.0,478.0 640.0,470.0" fill="none" stroke="#00ff00" stroke-width="1"/><polyline points="706.0,562.0 720.0,556.0 748.0,553.0" fill="none" stroke="#00ff00" stroke-width="1"/><polyline points="700.0,505.0 720.0,492.0 740.0,497.0 755.0,505.0" fill="none" stroke="#00ff00" stroke-width="1"/><polyline points="690.0,520.0 705.0,510.0 720.0,500.0 735.0,498.0" fill="none" stroke="#00ff00" stroke-width="1"/><polyline points="493.0,480.0 505.0,476.0 516.0,471.0 530.0,467.0 537.0,467.0" fill="none" stroke="#00ff00" stroke-width="1"/></g><polyline points="464.0,422.0 518.7,448.7 560.0,463.5 620.0,484.0 700.0,514.0 753.7,532.6" fill="none" stroke="#ff0" stroke-width="1"/><polyline points="444.0,460.3 500.0,454.0 560.0,448.0" fill="none" stroke="#ff0" stroke-width="1"/><line x1="496.5" y1="409.0" x2="510.0" y2="451.5" stroke="#0ff" stroke-width="2"/><polyline points="467.8,471.0 495.5,456.0 560.0,447.8 590.0,444.0 600.0,443.0" fill="none" stroke="#0ff" stroke-width="1.5"/><line x1="568.8" y1="446.8" x2="569.0" y2="509.4" stroke="#0ff" stroke-width="2"/><line x1="536.0" y1="450.5" x2="541.8" y2="495.0" stroke="#0ff" stroke-width="1.5"/><polyline points="598.9,519.0 640.0,510.0 670.0,502.3 707.9,487.8" fill="none" stroke="#0ff" stroke-width="1.5"/><polyline points="695.6,538.2 757.8,517.9 754.7,498.5" fill="none" stroke="#0ff" stroke-width="1.5"/><line x1="680.4" y1="480.2" x2="698.7" y2="558.6" stroke="#0ff" stroke-width="1.5"/><line x1="757.0" y1="490.0" x2="758.0" y2="517.0" stroke="#fff" stroke-width="1"/><polyline points="454.0,438.5 464.0,439.4 465.5,450.5 462.7,463.5 451.0,464.4 449.3,451.5" fill="none" stroke="#0000ff" stroke-width="1.5"/><rect x="494.0" y="414.0" width="5.0" height="6.0" fill="#0000ff"/><rect x="513.0" y="472.0" width="4.0" height="5.0" fill="#0000ff"/><rect x="579.0" y="448.0" width="3.0" height="6.0" fill="#0000ff"/><path d="M696 504 L713 493 L715 496 L699 506Z" fill="#0000ff"/><rect x="748.0" y="510.0" width="7.0" height="3.0" fill="#0000ff"/><path d="M731 508 L736 503 L745 503 L744 507 L738 508 L741 512 L741 519 L737 520 L733 514Z" fill="#ff00ff"/><rect x="481.0" y="429.0" width="3.0" height="3.0" fill="#f88"/><rect x="507.0" y="443.0" width="3.0" height="3.0" fill="#f88"/><rect x="539.0" y="455.0" width="3.0" height="3.0" fill="#f88"/><rect x="574.0" y="468.0" width="3.0" height="3.0" fill="#f88"/><rect x="615.0" y="481.0" width="3.0" height="3.0" fill="#f88"/><rect x="657.0" y="497.0" width="3.0" height="3.0" fill="#f88"/><rect x="712.0" y="515.0" width="3.0" height="3.0" fill="#f88"/><rect x="746.0" y="529.0" width="3.0" height="3.0" fill="#f88"/><circle cx="636" cy="567" r="14" fill="#0a3a0a"/><path d="M637 567 V583 L641 579 L644 586 L646 585 L643 578 L648 578Z" fill="#fff" stroke="#000" stroke-width="0.6"/><rect x="1014.5" y="338.5" width="371" height="262" fill="none" stroke="#0000ff" stroke-width="1.5"/><line x1="1014.0" y1="344.5" x2="1380.0" y2="344.5" stroke="#ff00ff" stroke-width="1.5"/><line x1="1379.5" y1="344.0" x2="1379.5" y2="594.0" stroke="#ff00ff" stroke-width="1.5"/><line x1="1030.5" y1="344.0" x2="1030.5" y2="594.0" stroke="#ff00ff" stroke-width="1.5"/><line x1="1030.0" y1="593.5" x2="1380.0" y2="593.5" stroke="#ff00ff" stroke-width="2"/><line x1="1061.5" y1="344.0" x2="1061.5" y2="594.0" stroke="#ff00ff" stroke-width="1.2"/><line x1="1030.0" y1="497.5" x2="1380.0" y2="497.5" stroke="#ff00ff" stroke-width="1.2"/><line x1="1030.0" y1="509.5" x2="1380.0" y2="509.5" stroke="#ff00ff" stroke-width="1.2"/><line x1="1030.0" y1="519.5" x2="1380.0" y2="519.5" stroke="#ff00ff" stroke-width="1.2"/><line x1="1030.0" y1="528.5" x2="1380.0" y2="528.5" stroke="#ff00ff" stroke-width="1.2"/><line x1="1030.0" y1="534.5" x2="1380.0" y2="534.5" stroke="#ff00ff" stroke-width="1.2"/><line x1="1030.0" y1="541.5" x2="1380.0" y2="541.5" stroke="#ff00ff" stroke-width="1.2"/><line x1="1030.0" y1="547.5" x2="1380.0" y2="547.5" stroke="#ff00ff" stroke-width="1.2"/><line x1="1030.0" y1="553.5" x2="1380.0" y2="553.5" stroke="#ff00ff" stroke-width="1.2"/><line x1="1030.0" y1="563.5" x2="1380.0" y2="563.5" stroke="#ff00ff" stroke-width="2"/><line x1="1018.5" y1="344.0" x2="1018.5" y2="357.0" stroke="#ff00ff" stroke-width="1"/><line x1="1022.0" y1="344.0" x2="1022.0" y2="357.0" stroke="#ff00ff" stroke-width="1"/><line x1="1025.0" y1="344.0" x2="1025.0" y2="357.0" stroke="#ff00ff" stroke-width="1"/><line x1="1028.0" y1="344.0" x2="1028.0" y2="357.0" stroke="#ff00ff" stroke-width="1"/><rect x="1014.0" y="357.0" width="16.0" height="2.0" fill="#ff00ff"/><rect x="1015.0" y="362.0" width="14.0" height="4.0" fill="#ff00ff"/><line x1="1014.0" y1="366.5" x2="1030.0" y2="366.5" stroke="#ff00ff" stroke-width="1"/><rect x="1018.0" y="359.0" width="1.0" height="3.0" fill="#ff00ff"/><rect x="1021.0" y="359.0" width="1.0" height="3.0" fill="#ff00ff"/><rect x="1024.0" y="359.0" width="1.0" height="3.0" fill="#ff00ff"/><rect x="1292" y="344.5" width="87.5" height="10" fill="none" stroke="#ff00ff" stroke-width="1.5"/><line x1="1292.0" y1="349.5" x2="1379.0" y2="349.5" stroke="#ff00ff" stroke-width="1"/><line x1="1335.5" y1="344.0" x2="1335.5" y2="355.0" stroke="#ff00ff" stroke-width="1"/><line x1="1372.0" y1="344.0" x2="1372.0" y2="349.5" stroke="#ff00ff" stroke-width="1"/><line x1="1363.5" y1="349.5" x2="1363.5" y2="355.0" stroke="#ff00ff" stroke-width="1"/><rect x="1307.0" y="346.0" width="14.0" height="2.0" fill="#ff00ff"/><rect x="1339.0" y="346.0" width="20.0" height="2.0" fill="#ff00ff"/><rect x="1304.0" y="351.0" width="20.0" height="2.0" fill="#ff00ff"/><rect x="1338.0" y="351.0" width="16.0" height="2.0" fill="#ff00ff"/><rect x="1364.0" y="351.0" width="14.0" height="2.0" fill="#ff00ff"/><rect x="1374.0" y="346.0" width="4.0" height="2.0" fill="#ff00ff"/><path d="M1056 352.5 H1061 M1057 354.5 H1061 M1056 352.5 V354.5" stroke="#0000ff" stroke-width="1" fill="none"/><path d="M1058 358.4 H1061 M1059 360.4 H1061 M1058 358.4 V360.4" stroke="#0000ff" stroke-width="1" fill="none"/><path d="M1058 364.4 H1061 M1059 366.4 H1061 M1058 364.4 V366.4" stroke="#0000ff" stroke-width="1" fill="none"/><path d="M1057 370.4 H1061 M1058 372.4 H1061 M1057 370.4 V372.4" stroke="#0000ff" stroke-width="1" fill="none"/><path d="M1057 376.3 H1061 M1058 378.3 H1061 M1057 376.3 V378.3" stroke="#0000ff" stroke-width="1" fill="none"/><path d="M1057 382.2 H1061 M1058 384.2 H1061 M1057 382.2 V384.2" stroke="#0000ff" stroke-width="1" fill="none"/><path d="M1056 388.2 H1061 M1057 390.2 H1061 M1056 388.2 V390.2" stroke="#0000ff" stroke-width="1" fill="none"/><path d="M1056 394.1 H1061 M1057 396.1 H1061 M1056 394.1 V396.1" stroke="#0000ff" stroke-width="1" fill="none"/><path d="M1058 400.1 H1061 M1059 402.1 H1061 M1058 400.1 V402.1" stroke="#0000ff" stroke-width="1" fill="none"/><path d="M1057 406.1 H1061 M1058 408.1 H1061 M1057 406.1 V408.1" stroke="#0000ff" stroke-width="1" fill="none"/><path d="M1057 412.0 H1061 M1058 414.0 H1061 M1057 412.0 V414.0" stroke="#0000ff" stroke-width="1" fill="none"/><path d="M1057 417.9 H1061 M1058 419.9 H1061 M1057 417.9 V419.9" stroke="#0000ff" stroke-width="1" fill="none"/><path d="M1057 423.9 H1061 M1058 425.9 H1061 M1057 423.9 V425.9" stroke="#0000ff" stroke-width="1" fill="none"/><path d="M1057 429.9 H1061 M1058 431.9 H1061 M1057 429.9 V431.9" stroke="#0000ff" stroke-width="1" fill="none"/><path d="M1057 435.8 H1061 M1058 437.8 H1061 M1057 435.8 V437.8" stroke="#0000ff" stroke-width="1" fill="none"/><path d="M1057 441.8 H1061 M1058 443.8 H1061 M1057 441.8 V443.8" stroke="#0000ff" stroke-width="1" fill="none"/><path d="M1057 447.7 H1061 M1058 449.7 H1061 M1057 447.7 V449.7" stroke="#0000ff" stroke-width="1" fill="none"/><path d="M1056 453.6 H1061 M1057 455.6 H1061 M1056 453.6 V455.6" stroke="#0000ff" stroke-width="1" fill="none"/><path d="M1058 459.6 H1061 M1059 461.6 H1061 M1058 459.6 V461.6" stroke="#0000ff" stroke-width="1" fill="none"/><path d="M1057 465.6 H1061 M1058 467.6 H1061 M1057 465.6 V467.6" stroke="#0000ff" stroke-width="1" fill="none"/><path d="M1057 471.5 H1061 M1058 473.5 H1061 M1057 471.5 V473.5" stroke="#0000ff" stroke-width="1" fill="none"/><path d="M1058 477.4 H1061 M1059 479.4 H1061 M1058 477.4 V479.4" stroke="#0000ff" stroke-width="1" fill="none"/><path d="M1057 483.4 H1061 M1058 485.4 H1061 M1057 483.4 V485.4" stroke="#0000ff" stroke-width="1" fill="none"/><path d="M1057 489.4 H1061 M1058 491.4 H1061 M1057 489.4 V491.4" stroke="#0000ff" stroke-width="1" fill="none"/><rect x="1043.0" y="381.0" width="3.0" height="2.5" fill="#ff00ff"/><rect x="1043.0" y="392.0" width="3.0" height="2.5" fill="#ff00ff"/><rect x="1043.0" y="403.0" width="3.0" height="2.5" fill="#ff00ff"/><rect x="1043.0" y="414.0" width="3.0" height="2.5" fill="#ff00ff"/><rect x="1043.0" y="426.0" width="3.0" height="2.5" fill="#ff00ff"/><rect x="1043.0" y="437.0" width="3.0" height="2.5" fill="#ff00ff"/><rect x="1043.0" y="449.0" width="3.0" height="2.5" fill="#ff00ff"/><rect x="1043.0" y="455.0" width="3.0" height="2.5" fill="#ff00ff"/><rect x="1043.0" y="460.0" width="3.0" height="2.5" fill="#ff00ff"/><rect x="1043.0" y="467.0" width="3.0" height="2.5" fill="#ff00ff"/><path d="M1036.5 477 V494.5 H1054 M1035 484 H1038 V490 M1041 493.5 V490.5 H1049 V493 M1050 493.5 H1054" stroke="#ff00ff" stroke-width="1" fill="none"/><rect x="1033.0" y="503.0" width="2.5" height="2.0" fill="#ff00ff"/><rect x="1041.7" y="503.0" width="2.5" height="2.0" fill="#ff00ff"/><rect x="1050.3" y="503.0" width="2.5" height="2.0" fill="#ff00ff"/><rect x="1033.0" y="514.0" width="2.5" height="2.0" fill="#ff00ff"/><rect x="1037.3" y="514.0" width="2.5" height="2.0" fill="#ff00ff"/><rect x="1041.7" y="514.0" width="2.5" height="2.0" fill="#ff00ff"/><rect x="1046.0" y="514.0" width="2.5" height="2.0" fill="#ff00ff"/><rect x="1050.3" y="514.0" width="2.5" height="2.0" fill="#ff00ff"/><rect x="1054.7" y="514.0" width="2.5" height="2.0" fill="#ff00ff"/><rect x="1033.0" y="524.0" width="2.5" height="2.0" fill="#ff00ff"/><rect x="1037.3" y="524.0" width="2.5" height="2.0" fill="#ff00ff"/><rect x="1041.7" y="524.0" width="2.5" height="2.0" fill="#ff00ff"/><rect x="1046.0" y="524.0" width="2.5" height="2.0" fill="#ff00ff"/><rect x="1050.3" y="524.0" width="2.5" height="2.0" fill="#ff00ff"/><rect x="1054.7" y="524.0" width="2.5" height="2.0" fill="#ff00ff"/><rect x="1033.0" y="531.0" width="2.5" height="2.0" fill="#ff00ff"/><rect x="1039.5" y="531.0" width="2.5" height="2.0" fill="#ff00ff"/><rect x="1046.0" y="531.0" width="2.5" height="2.0" fill="#ff00ff"/><rect x="1052.5" y="531.0" width="2.5" height="2.0" fill="#ff00ff"/><rect x="1033.0" y="538.0" width="2.5" height="2.0" fill="#ff00ff"/><rect x="1038.2" y="538.0" width="2.5" height="2.0" fill="#ff00ff"/><rect x="1043.4" y="538.0" width="2.5" height="2.0" fill="#ff00ff"/><rect x="1048.6" y="538.0" width="2.5" height="2.0" fill="#ff00ff"/><rect x="1053.8" y="538.0" width="2.5" height="2.0" fill="#ff00ff"/><rect x="1033.0" y="544.0" width="2.5" height="2.0" fill="#ff00ff"/><rect x="1039.5" y="544.0" width="2.5" height="2.0" fill="#ff00ff"/><rect x="1046.0" y="544.0" width="2.5" height="2.0" fill="#ff00ff"/><rect x="1052.5" y="544.0" width="2.5" height="2.0" fill="#ff00ff"/><rect x="1033.0" y="550.0" width="2.5" height="2.0" fill="#ff00ff"/><rect x="1037.3" y="550.0" width="2.5" height="2.0" fill="#ff00ff"/><rect x="1041.7" y="550.0" width="2.5" height="2.0" fill="#ff00ff"/><rect x="1046.0" y="550.0" width="2.5" height="2.0" fill="#ff00ff"/><rect x="1050.3" y="550.0" width="2.5" height="2.0" fill="#ff00ff"/><rect x="1054.7" y="550.0" width="2.5" height="2.0" fill="#ff00ff"/><rect x="1033.0" y="556.0" width="2.5" height="2.0" fill="#ff00ff"/><rect x="1041.7" y="556.0" width="2.5" height="2.0" fill="#ff00ff"/><rect x="1050.3" y="556.0" width="2.5" height="2.0" fill="#ff00ff"/><rect x="1033.0" y="560.0" width="2.5" height="2.0" fill="#ff00ff"/><rect x="1037.3" y="560.0" width="2.5" height="2.0" fill="#ff00ff"/><rect x="1041.7" y="560.0" width="2.5" height="2.0" fill="#ff00ff"/><rect x="1046.0" y="560.0" width="2.5" height="2.0" fill="#ff00ff"/><rect x="1050.3" y="560.0" width="2.5" height="2.0" fill="#ff00ff"/><rect x="1054.7" y="560.0" width="2.5" height="2.0" fill="#ff00ff"/><rect x="1050.0" y="503.0" width="10.0" height="2.0" fill="#ff00ff"/><rect x="1048.0" y="514.0" width="12.0" height="2.0" fill="#ff00ff"/><rect x="1049.0" y="524.0" width="11.0" height="2.0" fill="#ff00ff"/><polyline points="1064.3,457.0 1072.6,442.8 1082.4,442.8 1083.5,433.7 1096.4,433.7 1097.2,422.5 1104.2,422.5 1105.0,416.3 1120.5,415.5 1124.4,422.0 1129.6,423.8 1129.6,430.3 1131.7,422.5 1140.0,422.5 1140.8,419.4 1148.3,419.4 1149.0,415.0 1156.8,415.0 1158.0,409.0 1165.9,407.8 1176.3,406.5 1184.0,407.3 1198.3,407.3 1200.9,409.8 1207.4,410.4 1218.3,410.4 1220.3,405.2 1226.8,401.3 1236.0,400.0 1238.0,393.5 1252.8,392.2 1258.7,385.7 1271.7,385.0 1282.6,380.5 1294.2,380.5 1303.3,387.0 1315.0,387.5 1316.3,390.4 1326.0,389.6 1334.4,391.7 1353.9,394.3 1357.7,400.0 1363.0,401.3 1365.5,407.8 1372.0,407.8 1373.3,412.4 1376.4,412.4" fill="none" stroke="#ff0000" stroke-width="1.1"/><rect x="1063.0" y="455.0" width="2.5" height="4.0" fill="#fff"/><rect x="1072.0" y="441.0" width="2.5" height="4.0" fill="#fff"/><rect x="1251.0" y="391.0" width="2.5" height="4.0" fill="#fff"/><rect x="1329.0" y="390.0" width="2.5" height="4.0" fill="#fff"/><rect x="1064.3" y="502.0" width="2.0" height="7.0" fill="#00ff00"/><rect x="1064.3" y="513.0" width="2.0" height="6.0" fill="#00ff00"/><rect x="1070.0" y="502.0" width="2.0" height="7.0" fill="#00ff00"/><rect x="1070.0" y="513.0" width="2.0" height="6.0" fill="#00ff00"/><rect x="1073.9" y="502.0" width="2.0" height="7.0" fill="#00ff00"/><rect x="1073.9" y="513.0" width="2.0" height="6.0" fill="#00ff00"/><rect x="1083.0" y="502.0" width="2.0" height="7.0" fill="#00ff00"/><rect x="1096.4" y="502.0" width="2.0" height="7.0" fill="#00ff00"/><rect x="1096.4" y="513.0" width="2.0" height="6.0" fill="#00ff00"/><rect x="1098.5" y="502.0" width="2.0" height="7.0" fill="#00ff00"/><rect x="1098.5" y="513.0" width="2.0" height="6.0" fill="#00ff00"/><rect x="1103.7" y="502.0" width="2.0" height="7.0" fill="#00ff00"/><rect x="1103.7" y="513.0" width="2.0" height="6.0" fill="#00ff00"/><rect x="1116.7" y="502.0" width="2.0" height="7.0" fill="#00ff00"/><rect x="1116.7" y="513.0" width="2.0" height="6.0" fill="#00ff00"/><rect x="1119.2" y="502.0" width="2.0" height="7.0" fill="#00ff00"/><rect x="1119.2" y="513.0" width="2.0" height="6.0" fill="#00ff00"/><rect x="1124.4" y="502.0" width="2.0" height="7.0" fill="#00ff00"/><rect x="1124.4" y="513.0" width="2.0" height="6.0" fill="#00ff00"/><rect x="1126.5" y="502.0" width="2.0" height="7.0" fill="#00ff00"/><rect x="1126.5" y="513.0" width="2.0" height="6.0" fill="#00ff00"/><rect x="1129.6" y="502.0" width="2.0" height="7.0" fill="#00ff00"/><rect x="1129.6" y="513.0" width="2.0" height="6.0" fill="#00ff00"/><rect x="1132.7" y="502.0" width="2.0" height="7.0" fill="#00ff00"/><rect x="1132.7" y="513.0" width="2.0" height="6.0" fill="#00ff00"/><rect x="1140.0" y="502.0" width="2.0" height="7.0" fill="#00ff00"/><rect x="1140.0" y="513.0" width="2.0" height="6.0" fill="#00ff00"/><rect x="1147.8" y="502.0" width="2.0" height="7.0" fill="#00ff00"/><rect x="1147.8" y="513.0" width="2.0" height="6.0" fill="#00ff00"/><rect x="1156.8" y="502.0" width="2.0" height="7.0" fill="#00ff00"/><rect x="1156.8" y="513.0" width="2.0" height="6.0" fill="#00ff00"/><rect x="1168.0" y="502.0" width="2.0" height="7.0" fill="#00ff00"/><rect x="1176.3" y="502.0" width="2.0" height="7.0" fill="#00ff00"/><rect x="1176.3" y="513.0" width="2.0" height="6.0" fill="#00ff00"/><rect x="1184.1" y="502.0" width="2.0" height="7.0" fill="#00ff00"/><rect x="1184.1" y="513.0" width="2.0" height="6.0" fill="#00ff00"/><rect x="1196.5" y="502.0" width="2.0" height="7.0" fill="#00ff00"/><rect x="1196.5" y="513.0" width="2.0" height="6.0" fill="#00ff00"/><rect x="1199.6" y="502.0" width="2.0" height="7.0" fill="#00ff00"/><rect x="1199.6" y="513.0" width="2.0" height="6.0" fill="#00ff00"/><rect x="1210.0" y="502.0" width="2.0" height="7.0" fill="#00ff00"/><rect x="1210.0" y="513.0" width="2.0" height="6.0" fill="#00ff00"/><rect x="1217.8" y="502.0" width="2.0" height="7.0" fill="#00ff00"/><rect x="1217.8" y="513.0" width="2.0" height="6.0" fill="#00ff00"/><rect x="1228.6" y="502.0" width="2.0" height="7.0" fill="#00ff00"/><rect x="1228.6" y="513.0" width="2.0" height="6.0" fill="#00ff00"/><rect x="1236.4" y="502.0" width="2.0" height="7.0" fill="#00ff00"/><rect x="1236.4" y="513.0" width="2.0" height="6.0" fill="#00ff00"/><rect x="1250.2" y="502.0" width="2.0" height="7.0" fill="#00ff00"/><rect x="1250.2" y="513.0" width="2.0" height="6.0" fill="#00ff00"/><rect x="1252.8" y="502.0" width="2.0" height="7.0" fill="#00ff00"/><rect x="1252.8" y="513.0" width="2.0" height="6.0" fill="#00ff00"/><rect x="1259.2" y="502.0" width="2.0" height="7.0" fill="#00ff00"/><rect x="1271.7" y="502.0" width="2.0" height="7.0" fill="#00ff00"/><rect x="1271.7" y="513.0" width="2.0" height="6.0" fill="#00ff00"/><rect x="1283.9" y="502.0" width="2.0" height="7.0" fill="#00ff00"/><rect x="1283.9" y="513.0" width="2.0" height="6.0" fill="#00ff00"/><rect x="1293.5" y="502.0" width="2.0" height="7.0" fill="#00ff00"/><rect x="1293.5" y="513.0" width="2.0" height="6.0" fill="#00ff00"/><rect x="1303.8" y="502.0" width="2.0" height="7.0" fill="#00ff00"/><rect x="1303.8" y="513.0" width="2.0" height="6.0" fill="#00ff00"/><rect x="1315.0" y="502.0" width="2.0" height="7.0" fill="#00ff00"/><rect x="1315.0" y="513.0" width="2.0" height="6.0" fill="#00ff00"/><rect x="1317.6" y="502.0" width="2.0" height="7.0" fill="#00ff00"/><rect x="1317.6" y="513.0" width="2.0" height="6.0" fill="#00ff00"/><rect x="1320.9" y="502.0" width="2.0" height="7.0" fill="#00ff00"/><rect x="1320.9" y="513.0" width="2.0" height="6.0" fill="#00ff00"/><rect x="1324.0" y="502.0" width="2.0" height="7.0" fill="#00ff00"/><rect x="1324.0" y="513.0" width="2.0" height="6.0" fill="#00ff00"/><rect x="1330.5" y="502.0" width="2.0" height="7.0" fill="#00ff00"/><rect x="1343.5" y="502.0" width="2.0" height="7.0" fill="#00ff00"/><rect x="1343.5" y="513.0" width="2.0" height="6.0" fill="#00ff00"/><rect x="1347.4" y="502.0" width="2.0" height="7.0" fill="#00ff00"/><rect x="1347.4" y="513.0" width="2.0" height="6.0" fill="#00ff00"/><rect x="1355.2" y="502.0" width="2.0" height="7.0" fill="#00ff00"/><rect x="1355.2" y="513.0" width="2.0" height="6.0" fill="#00ff00"/><rect x="1363.4" y="502.0" width="2.0" height="7.0" fill="#00ff00"/><rect x="1363.4" y="513.0" width="2.0" height="6.0" fill="#00ff00"/><rect x="1373.3" y="502.0" width="2.0" height="7.0" fill="#00ff00"/><rect x="1373.3" y="513.0" width="2.0" height="6.0" fill="#00ff00"/><rect x="1377.2" y="502.0" width="2.0" height="7.0" fill="#00ff00"/><rect x="1377.2" y="513.0" width="2.0" height="6.0" fill="#00ff00"/><clipPath id="sc"><rect x="1063" y="565" width="316" height="28"/></clipPath><g clip-path="url(#sc)"><line x1="1344.4" y1="564" x2="1359.9" y2="594" stroke="#00ff00" stroke-width="1"/><line x1="1183.0" y1="564" x2="1199.8" y2="594" stroke="#00ff00" stroke-width="1"/><line x1="1319.0" y1="564" x2="1342.9" y2="594" stroke="#00ff00" stroke-width="1"/><line x1="1240.8" y1="564" x2="1260.5" y2="594" stroke="#00ff00" stroke-width="1"/><line x1="1073.8" y1="564" x2="1098.4" y2="594" stroke="#00ff00" stroke-width="1"/><line x1="1070.1" y1="564" x2="1087.1" y2="594" stroke="#00ff00" stroke-width="1"/><line x1="1167.3" y1="564" x2="1189.4" y2="594" stroke="#00ff00" stroke-width="1"/><line x1="1267.5" y1="564" x2="1284.3" y2="594" stroke="#00ff00" stroke-width="1"/><line x1="1345.3" y1="564" x2="1370.6" y2="594" stroke="#00ff00" stroke-width="1"/><line x1="1047.9" y1="564" x2="1068.8" y2="594" stroke="#00ff00" stroke-width="1"/><line x1="1199.5" y1="564" x2="1216.6" y2="594" stroke="#00ff00" stroke-width="1"/><line x1="1198.0" y1="564" x2="1214.5" y2="594" stroke="#00ff00" stroke-width="1"/><line x1="1268.1" y1="564" x2="1288.6" y2="594" stroke="#00ff00" stroke-width="1"/><line x1="1369.9" y1="564" x2="1395.6" y2="594" stroke="#00ff00" stroke-width="1"/><line x1="1377.5" y1="564" x2="1395.0" y2="594" stroke="#00ff00" stroke-width="1"/><line x1="1321.7" y1="564" x2="1342.8" y2="594" stroke="#00ff00" stroke-width="1"/><line x1="1278.4" y1="564" x2="1304.3" y2="594" stroke="#00ff00" stroke-width="1"/><line x1="1062.6" y1="564" x2="1081.1" y2="594" stroke="#00ff00" stroke-width="1"/><line x1="1176.4" y1="564" x2="1197.6" y2="594" stroke="#00ff00" stroke-width="1"/><line x1="1114.1" y1="564" x2="1140.0" y2="594" stroke="#00ff00" stroke-width="1"/><line x1="1111.2" y1="564" x2="1128.4" y2="594" stroke="#00ff00" stroke-width="1"/><line x1="1088.6" y1="564" x2="1106.1" y2="594" stroke="#00ff00" stroke-width="1"/><line x1="1312.2" y1="564" x2="1303.2" y2="594" stroke="#00ff00" stroke-width="1"/><line x1="1116.7" y1="564" x2="1100.9" y2="594" stroke="#00ff00" stroke-width="1"/><line x1="1271.8" y1="564" x2="1254.9" y2="594" stroke="#00ff00" stroke-width="1"/><line x1="1146.2" y1="564" x2="1128.4" y2="594" stroke="#00ff00" stroke-width="1"/><line x1="1308.5" y1="564" x2="1291.2" y2="594" stroke="#00ff00" stroke-width="1"/><line x1="1100.7" y1="564" x2="1087.1" y2="594" stroke="#00ff00" stroke-width="1"/><line x1="1065.4" y1="564" x2="1047.1" y2="594" stroke="#00ff00" stroke-width="1"/><line x1="1381.1" y1="564" x2="1362.4" y2="594" stroke="#00ff00" stroke-width="1"/><line x1="1068.2" y1="564" x2="1056.0" y2="594" stroke="#00ff00" stroke-width="1"/><line x1="1242.2" y1="564" x2="1227.8" y2="594" stroke="#00ff00" stroke-width="1"/><line x1="1097.8" y1="564" x2="1080.3" y2="594" stroke="#00ff00" stroke-width="1"/><line x1="1162.5" y1="564" x2="1148.4" y2="594" stroke="#00ff00" stroke-width="1"/><line x1="1079.8" y1="594.5" x2="1118.4" y2="562.7" stroke="#0ff" stroke-width="1"/><line x1="1120.2" y1="562.7" x2="1140.8" y2="594.5" stroke="#0ff" stroke-width="1"/><line x1="1142.5" y1="594.5" x2="1194" y2="562.7" stroke="#0ff" stroke-width="1"/><line x1="1253.4" y1="562.7" x2="1266.3" y2="594.5" stroke="#0ff" stroke-width="1"/><line x1="1285" y1="562.7" x2="1300" y2="594.5" stroke="#0ff" stroke-width="1"/><line x1="1287" y1="594.5" x2="1342.7" y2="562.7" stroke="#0ff" stroke-width="1"/><line x1="1326.4" y1="562.7" x2="1340.2" y2="594.5" stroke="#0ff" stroke-width="1"/><path d="M1064 570 L1065.2 568 L1067 570Z" fill="#00ff00"/><path d="M1064 579 L1065.0 577 L1067 579Z" fill="#00ff00"/><path d="M1068 587 L1069.2 585 L1071 587Z" fill="#00ff00"/><path d="M1075 569 L1076.3 567 L1078 569Z" fill="#00ff00"/><path d="M1075 589 L1076.6 587 L1078 589Z" fill="#00ff00"/><path d="M1092 570 L1093.3 568 L1095 570Z" fill="#00ff00"/><path d="M1088 586 L1090.0 584 L1091 586Z" fill="#00ff00"/><path d="M1098 579 L1099.9 577 L1101 579Z" fill="#00ff00"/><path d="M1113 571 L1114.4 569 L1116 571Z" fill="#00ff00"/><path d="M1111 577 L1113.0 575 L1114 577Z" fill="#00ff00"/><path d="M1110 590 L1111.2 588 L1113 590Z" fill="#00ff00"/><path d="M1126 579 L1127.7 577 L1129 579Z" fill="#00ff00"/><path d="M1126 588 L1127.4 586 L1129 588Z" fill="#00ff00"/><path d="M1136 569 L1137.9 567 L1139 569Z" fill="#00ff00"/><path d="M1135 579 L1136.1 577 L1138 579Z" fill="#00ff00"/><path d="M1135 588 L1136.1 586 L1138 588Z" fill="#00ff00"/><path d="M1149 568 L1150.0 566 L1152 568Z" fill="#00ff00"/><path d="M1147 579 L1148.3 577 L1150 579Z" fill="#00ff00"/><path d="M1144 587 L1145.6 585 L1147 587Z" fill="#00ff00"/><path d="M1158 577 L1159.4 575 L1161 577Z" fill="#00ff00"/><path d="M1161 586 L1162.3 584 L1164 586Z" fill="#00ff00"/><path d="M1172 569 L1173.8 567 L1175 569Z" fill="#00ff00"/><path d="M1169 578 L1170.2 576 L1172 578Z" fill="#00ff00"/><path d="M1170 587 L1171.5 585 L1173 587Z" fill="#00ff00"/><path d="M1181 571 L1182.6 569 L1184 571Z" fill="#00ff00"/><path d="M1179 578 L1180.1 576 L1182 578Z" fill="#00ff00"/><path d="M1192 569 L1193.4 567 L1195 569Z" fill="#00ff00"/><path d="M1206 571 L1207.2 569 L1209 571Z" fill="#00ff00"/><path d="M1206 577 L1207.1 575 L1209 577Z" fill="#00ff00"/><path d="M1204 590 L1205.8 588 L1207 590Z" fill="#00ff00"/><path d="M1227 580 L1228.1 578 L1230 580Z" fill="#00ff00"/><path d="M1227 588 L1228.2 586 L1230 588Z" fill="#00ff00"/><path d="M1237 571 L1238.9 569 L1240 571Z" fill="#00ff00"/><path d="M1236 580 L1237.7 578 L1239 580Z" fill="#00ff00"/><path d="M1239 586 L1240.3 584 L1242 586Z" fill="#00ff00"/><path d="M1249 572 L1250.4 570 L1252 572Z" fill="#00ff00"/><path d="M1253 578 L1254.0 576 L1256 578Z" fill="#00ff00"/><path d="M1250 589 L1251.7 587 L1253 589Z" fill="#00ff00"/><path d="M1264 570 L1265.2 568 L1267 570Z" fill="#00ff00"/><path d="M1261 579 L1262.6 577 L1264 579Z" fill="#00ff00"/><path d="M1264 588 L1265.6 586 L1267 588Z" fill="#00ff00"/><path d="M1272 571 L1273.8 569 L1275 571Z" fill="#00ff00"/><path d="M1274 578 L1276.0 576 L1277 578Z" fill="#00ff00"/><path d="M1271 587 L1272.7 585 L1274 587Z" fill="#00ff00"/><path d="M1284 570 L1285.1 568 L1287 570Z" fill="#00ff00"/><path d="M1284 588 L1285.1 586 L1287 588Z" fill="#00ff00"/><path d="M1299 569 L1300.4 567 L1302 569Z" fill="#00ff00"/><path d="M1296 587 L1297.9 585 L1299 587Z" fill="#00ff00"/><path d="M1307 579 L1308.6 577 L1310 579Z" fill="#00ff00"/><path d="M1310 590 L1311.9 588 L1313 590Z" fill="#00ff00"/><path d="M1316 589 L1317.7 587 L1319 589Z" fill="#00ff00"/><path d="M1331 569 L1332.3 567 L1334 569Z" fill="#00ff00"/><path d="M1328 589 L1329.6 587 L1331 589Z" fill="#00ff00"/><path d="M1340 570 L1341.7 568 L1343 570Z" fill="#00ff00"/><path d="M1340 580 L1341.2 578 L1343 580Z" fill="#00ff00"/><path d="M1344 590 L1345.9 588 L1347 590Z" fill="#00ff00"/><path d="M1352 587 L1353.6 585 L1355 587Z" fill="#00ff00"/><path d="M1365 569 L1366.7 567 L1368 569Z" fill="#00ff00"/><path d="M1364 578 L1365.0 576 L1367 578Z" fill="#00ff00"/><path d="M1364 587 L1365.1 585 L1367 587Z" fill="#00ff00"/><path d="M1377 571 L1378.1 569 L1380 571Z" fill="#00ff00"/><path d="M1379 580 L1380.2 578 L1382 580Z" fill="#00ff00"/><path d="M1377 589 L1378.3 587 L1380 589Z" fill="#00ff00"/><line x1="1064" y1="578.5" x2="1380" y2="578.5" stroke="#f00" stroke-width="1"/><polyline points="1064,586.5 1150,585.5 1230,584.5 1300,584.5 1378,583.5" fill="none" stroke="#ff0" stroke-width="1"/><path d="M1066 578 L1069 574 L1075 574 L1077 578Z" fill="#f00"/><path d="M1078 578 L1081 574 L1087 574 L1089 578Z" fill="#f00"/><path d="M1253 578 L1256 574 L1262 574 L1264 578Z" fill="#f00"/><path d="M1337 578 L1340 574 L1346 574 L1348 578Z" fill="#f00"/><rect x="1086" y="583" width="3" height="3" fill="#f99"/><rect x="1109" y="583" width="3" height="3" fill="#f99"/><rect x="1145" y="583" width="3" height="3" fill="#f99"/><rect x="1189" y="583" width="3" height="3" fill="#f99"/><rect x="1203" y="583" width="3" height="3" fill="#f99"/><rect x="1252" y="583" width="3" height="3" fill="#f99"/><rect x="1265" y="583" width="3" height="3" fill="#f99"/><rect x="1300" y="583" width="3" height="3" fill="#f99"/><rect x="1329" y="583" width="3" height="3" fill="#f99"/><rect x="1361" y="583" width="3" height="3" fill="#f99"/></g></svg>
<div class="a" style="left:53px;top:813px;width:1840px;height:15px;background:#fbf9fa;border-bottom:1px solid #ecd6de;border-right:1px solid #ecd6de"></div>
<div class="a" style="left:53px;top:813px;width:1px;height:14px;background:#888"></div>
<svg style="left:53px;top:813px" width="160" height="14" viewBox="0 0 160 14">
<g stroke="#b8b8b8"><path d="M18.5 0 V13 M36.5 0 V13 M54.5 0 V13 M72.5 0 V13"/></g>
<path d="M4.5 3 V11" stroke="#000" stroke-width="1.2"/><path d="M13 3 L6 7 L13 11Z" fill="#000"/>
<path d="M30 3 L24 7 L30 11Z" fill="#000"/>
<path d="M42 3 L48 7 L42 11Z" fill="#000"/>
<path d="M60 3 L66 7 L60 11Z" fill="#000"/><path d="M67.5 3 V11" stroke="#000" stroke-width="1.2"/>
<path d="M76 0 L80 13 H114 L118 0Z" fill="#000"/>
<path d="M118 0 L114 13 H151 L155 0" fill="#fff" stroke="#000" stroke-width="1"/>
</svg>
<div class="t" style="left:138px;top:814px;font-size:12px;color:#fff">模型</div>
<div class="t" style="left:172px;top:814px;font-size:12px;color:#000">布局1</div>
<div class="a" style="left:0;top:833px;width:1920px;height:2px;background:#8a8a8a"></div>
<div class="a" style="left:6px;top:845px;width:1px;height:166px;background:#b0b0b0"></div>
<div class="a" style="left:12px;top:845px;width:1px;height:166px;background:#b0b0b0"></div>
<div class="a" style="left:6px;top:1010px;width:7px;height:1px;background:#b0b0b0"></div>
<div class="a" style="left:16px;top:844px;width:1897px;height:172px;background:#fff;border-left:2px solid #7a7a7a;border-top:2px solid #7a7a7a"></div>
<div class="a" style="left:1896px;top:846px;width:17px;height:149px;background:#fbf9fa"></div>
<svg style="left:1898px;top:850px" width="12" height="8" viewBox="0 0 12 8"><path d="M1.5 6.5 L6 2 L10.5 6.5" fill="none" stroke="#666" stroke-width="1.6"/></svg>
<div class="a" style="left:1897px;top:961px;width:15px;height:17px;background:#cdcdcd"></div>
<svg style="left:1898px;top:982px" width="12" height="8" viewBox="0 0 12 8"><path d="M1.5 1.5 L6 6 L10.5 1.5" fill="none" stroke="#666" stroke-width="1.6"/></svg>
<div class="a" style="left:18px;top:995px;width:1894px;height:1px;background:#a0a0a0"></div>
<div class="a" style="left:1896px;top:996px;width:17px;height:20px;background:#fbf9fa"></div>
<svg style="left:1882px;top:999px" width="10" height="12" viewBox="0 0 10 12"><path d="M2 1.5 L7 6 L2 10.5" fill="none" stroke="#666" stroke-width="1.6"/></svg>
<span class="t" style="left:19px;top:845px;font-size:15px">重</span><span class="t" style="left:35px;top:845px;font-size:15px">生</span><span class="t" style="left:51px;top:845px;font-size:15px">成</span><span class="t" style="left:67px;top:845px;font-size:15px">模</span><span class="t" style="left:83px;top:845px;font-size:15px">型</span><span class="t" style="left:107px;top:846px;font-family:'Liberation Mono',monospace;font-size:13px">-</span><span class="t" style="left:123px;top:845px;font-size:15px">缓</span><span class="t" style="left:139px;top:845px;font-size:15px">存</span><span class="t" style="left:155px;top:845px;font-size:15px">视</span><span class="t" style="left:171px;top:845px;font-size:15px">口</span><span class="t" style="left:187px;top:845px;font-size:15px">。</span>
<span class="t" style="left:19px;top:861px;font-size:15px">命</span><span class="t" style="left:35px;top:861px;font-size:15px">令</span><span class="t" style="left:51px;top:862px;font-family:'Liberation Mono',monospace;font-size:13px">:</span><span class="t" style="left:67px;top:862px;font-family:'Liberation Mono',monospace;font-size:13px">*</span><span class="t" style="left:75px;top:861px;font-size:15px">取</span><span class="t" style="left:91px;top:861px;font-size:15px">消</span><span class="t" style="left:107px;top:862px;font-family:'Liberation Mono',monospace;font-size:13px">*</span>
<span class="t" style="left:19px;top:877px;font-size:15px">命</span><span class="t" style="left:35px;top:877px;font-size:15px">令</span><span class="t" style="left:51px;top:878px;font-family:'Liberation Mono',monospace;font-size:13px">:</span><span class="t" style="left:67px;top:877px;font-size:15px">指</span><span class="t" style="left:83px;top:877px;font-size:15px">定</span><span class="t" style="left:99px;top:877px;font-size:15px">对</span><span class="t" style="left:115px;top:877px;font-size:15px">角</span><span class="t" style="left:131px;top:877px;font-size:15px">点</span><span class="t" style="left:147px;top:878px;font-family:'Liberation Mono',monospace;font-size:13px">:</span>
<span class="t" style="left:19px;top:893px;font-size:15px">命</span><span class="t" style="left:35px;top:893px;font-size:15px">令</span><span class="t" style="left:51px;top:894px;font-family:'Liberation Mono',monospace;font-size:13px">:</span><span class="t" style="left:67px;top:894px;font-family:'Liberation Mono',monospace;font-size:13px">e</span><span class="t" style="left:83px;top:894px;font-family:'Liberation Mono',monospace;font-size:13px">E</span><span class="t" style="left:91px;top:894px;font-family:'Liberation Mono',monospace;font-size:13px">R</span><span class="t" style="left:99px;top:894px;font-family:'Liberation Mono',monospace;font-size:13px">A</span><span class="t" style="left:107px;top:894px;font-family:'Liberation Mono',monospace;font-size:13px">S</span><span class="t" style="left:115px;top:894px;font-family:'Liberation Mono',monospace;font-size:13px">E</span><span class="t" style="left:131px;top:893px;font-size:15px">找</span><span class="t" style="left:147px;top:893px;font-size:15px">到</span><span class="t" style="left:171px;top:894px;font-family:'Liberation Mono',monospace;font-size:13px">1</span><span class="t" style="left:187px;top:893px;font-size:15px">个</span>
<span class="t" style="left:19px;top:909px;font-size:15px">命</span><span class="t" style="left:35px;top:909px;font-size:15px">令</span><span class="t" style="left:51px;top:910px;font-family:'Liberation Mono',monospace;font-size:13px">:</span><span class="t" style="left:67px;top:910px;font-family:'Liberation Mono',monospace;font-size:13px">*</span><span class="t" style="left:75px;top:909px;font-size:15px">取</span><span class="t" style="left:91px;top:909px;font-size:15px">消</span><span class="t" style="left:107px;top:910px;font-family:'Liberation Mono',monospace;font-size:13px">*</span>
<span class="t" style="left:19px;top:925px;font-size:15px">命</span><span class="t" style="left:35px;top:925px;font-size:15px">令</span><span class="t" style="left:51px;top:926px;font-family:'Liberation Mono',monospace;font-size:13px">:</span><span class="t" style="left:67px;top:926px;font-family:'Liberation Mono',monospace;font-size:13px">*</span><span class="t" style="left:75px;top:925px;font-size:15px">取</span><span class="t" style="left:91px;top:925px;font-size:15px">消</span><span class="t" style="left:107px;top:926px;font-family:'Liberation Mono',monospace;font-size:13px">*</span>
<span class="t" style="left:19px;top:941px;font-size:15px">命</span><span class="t" style="left:35px;top:941px;font-size:15px">令</span><span class="t" style="left:51px;top:942px;font-family:'Liberation Mono',monospace;font-size:13px">:</span><span class="t" style="left:67px;top:942px;font-family:'Liberation Mono',monospace;font-size:13px">*</span><span class="t" style="left:75px;top:941px;font-size:15px">取</span><span class="t" style="left:91px;top:941px;font-size:15px">消</span><span class="t" style="left:107px;top:942px;font-family:'Liberation Mono',monospace;font-size:13px">*</span>
<span class="t" style="left:19px;top:957px;font-size:15px">命</span><span class="t" style="left:35px;top:957px;font-size:15px">令</span><span class="t" style="left:51px;top:958px;font-family:'Liberation Mono',monospace;font-size:13px">:</span><span class="t" style="left:75px;top:958px;font-family:'Liberation Mono',monospace;font-size:13px"><</span><span class="t" style="left:83px;top:957px;font-size:15px">切</span><span class="t" style="left:99px;top:957px;font-size:15px">换</span><span class="t" style="left:115px;top:957px;font-size:15px">到</span><span class="t" style="left:131px;top:958px;font-family:'Liberation Mono',monospace;font-size:13px">:</span><span class="t" style="left:147px;top:957px;font-size:15px">模</span><span class="t" style="left:163px;top:957px;font-size:15px">型</span><span class="t" style="left:179px;top:958px;font-family:'Liberation Mono',monospace;font-size:13px">></span>
<span class="t" style="left:19px;top:973px;font-size:15px">重</span><span class="t" style="left:35px;top:973px;font-size:15px">生</span><span class="t" style="left:51px;top:973px;font-size:15px">成</span><span class="t" style="left:67px;top:973px;font-size:15px">模</span><span class="t" style="left:83px;top:973px;font-size:15px">型</span><span class="t" style="left:107px;top:974px;font-family:'Liberation Mono',monospace;font-size:13px">-</span><span class="t" style="left:123px;top:973px;font-size:15px">缓</span><span class="t" style="left:139px;top:973px;font-size:15px">存</span><span class="t" style="left:155px;top:973px;font-size:15px">视</span><span class="t" style="left:171px;top:973px;font-size:15px">口</span><span class="t" style="left:187px;top:973px;font-size:15px">。</span>
<span class="t" style="left:19px;top:997px;font-size:15px">命</span><span class="t" style="left:35px;top:997px;font-size:15px">令</span><span class="t" style="left:51px;top:998px;font-family:'Liberation Mono',monospace;font-size:13px">:</span>
<div class="a" style="left:0;top:1016px;width:1920px;height:1px;background:#9a9a9a"></div>
<div class="a" style="left:0;top:1017px;width:1920px;height:23px;background:#fbf9fa"></div>
<div class="a" style="left:5px;top:1021px;width:204px;height:18px;background:#fff;border:1px solid #a8a8a8"></div>
<div class="t mono" style="left:7px;top:1025px;font-size:11px;color:#000;letter-spacing:-0.6px">408256.2633, 3885492.4259, 0.0000</div>
<div class="a" style="left:214px;top:1021px;width:27px;height:18px;border-right:1px solid #a8a8a8;border-bottom:1px solid #a8a8a8;border-left:1px solid #eee;border-top:1px solid #eee"></div>
<div class="t" style="left:215px;top:1025px;font-size:12px;color:#000">捕捉</div>
<div class="a" style="left:246px;top:1021px;width:27px;height:18px;border-right:1px solid #a8a8a8;border-bottom:1px solid #a8a8a8;border-left:1px solid #eee;border-top:1px solid #eee"></div>
<div class="t" style="left:247px;top:1025px;font-size:12px;color:#000">栅格</div>
<div class="a" style="left:310px;top:1021px;width:27px;height:18px;border-right:1px solid #a8a8a8;border-bottom:1px solid #a8a8a8;border-left:1px solid #eee;border-top:1px solid #eee"></div>
<div class="t" style="left:311px;top:1025px;font-size:12px;color:#000">极轴</div>
<div class="a" style="left:342px;top:1021px;width:51px;height:18px;border-right:1px solid #a8a8a8;border-bottom:1px solid #a8a8a8;border-left:1px solid #eee;border-top:1px solid #eee"></div>
<div class="t" style="left:343px;top:1025px;font-size:12px;color:#000">对象捕捉</div>
<div class="a" style="left:397px;top:1021px;width:52px;height:18px;border-right:1px solid #a8a8a8;border-bottom:1px solid #a8a8a8;border-left:1px solid #eee;border-top:1px solid #eee"></div>
<div class="t" style="left:398px;top:1025px;font-size:12px;color:#000">对象追踪</div>
<div class="a" style="left:454px;top:1021px;width:27px;height:18px;border-right:1px solid #a8a8a8;border-bottom:1px solid #a8a8a8;border-left:1px solid #eee;border-top:1px solid #eee"></div>
<div class="t" style="left:455px;top:1026px;font-family:'Liberation Serif',serif;font-size:11.5px;color:#000;letter-spacing:-0.9px">DUCS</div>
<div class="a" style="left:485px;top:1021px;width:23px;height:18px;border-right:1px solid #a8a8a8;border-bottom:1px solid #a8a8a8;border-left:1px solid #eee;border-top:1px solid #eee"></div>
<div class="t" style="left:486px;top:1026px;font-family:'Liberation Serif',serif;font-size:11.5px;color:#000;letter-spacing:-0.9px">DYN</div>
<div class="a" style="left:511px;top:1021px;width:28px;height:18px;border-right:1px solid #a8a8a8;border-bottom:1px solid #a8a8a8;border-left:1px solid #eee;border-top:1px solid #eee"></div>
<div class="t" style="left:512px;top:1025px;font-size:12px;color:#000">线宽</div>
<div class="a" style="left:277px;top:1021px;width:28px;height:19px;border-left:2px solid #222;border-top:1px solid #222"></div>
<div class="t" style="left:280px;top:1026px;font-size:12px;color:#000">正交</div>
<div class="a" style="left:543px;top:1021px;width:28px;height:19px;border-left:2px solid #222;border-top:1px solid #222"></div>
<div class="t" style="left:546px;top:1026px;font-size:12px;color:#000">模型</div>
<div class="a" style="left:1814px;top:1021px;width:1px;height:18px;background:#bbb"></div>
<div class="a" style="left:1814px;top:1020px;width:64px;height:1px;background:#bbb"></div>
<svg style="left:1817px;top:1021px" width="100" height="18" viewBox="0 0 100 18">
<path d="M2 15 L10 4 M5 4 L12 12" stroke="#6a9ad8" stroke-width="1.4"/>
<path d="M10 5 L17 17 H3Z" fill="#f0d020" stroke="#a08000" stroke-width="0.8"/><rect x="9.3" y="9" width="1.5" height="4" fill="#111"/><rect x="9.3" y="14" width="1.5" height="1.5" fill="#111"/>
<path d="M27 8 V5 Q27 1.5 31 1.5 Q35 1.5 35 5 V7" fill="none" stroke="#d0b020" stroke-width="1.6"/><rect x="21" y="7" width="12" height="10" rx="1.5" fill="#c8a818" stroke="#333" stroke-width="0.8"/><path d="M22 10 H32 M22 13 H32" stroke="#fff" stroke-width="0.8"/>
<rect x="41" y="3" width="12" height="14" fill="#2a4a8a"/><path d="M44 3 V17 M41 7 H48" stroke="#fff" stroke-width="0.8"/><circle cx="53" cy="14" r="4" fill="#20b030"/><path d="M51 14 L52.5 15.5 L55 12.5" stroke="#fff" fill="none" stroke-width="1.2"/>
<path d="M67 11 H74 L70.5 14.5Z" fill="#000"/>
<rect x="83.5" y="0.5" width="15" height="16" fill="#b8d0e8" stroke="#2a5a9a" stroke-width="1.5"/><rect x="86" y="3" width="10" height="11" fill="#dce8f4"/>
</svg>
<div class="a" style="left:0;top:1040px;width:1920px;height:40px;background:linear-gradient(90deg,#d9d9db 0px,#dcd8d8 150px,#ece0dc 260px,#efe3df 900px,#efe2de 1500px,#ebe0dd 1620px,#efe0dc 1920px)"></div>
<svg style="left:0;top:1040px" width="400" height="40" viewBox="0 0 400 40">
<path d="M16 13.5 L23.3 12.4 V19.5 H16Z M24.5 12.2 L32 11 V19.5 H24.5Z M16 20.5 H23.3 V27.6 L16 26.5Z M24.5 20.5 H32 V29 L24.5 27.8Z" fill="#000"/>
<defs><linearGradient id="edg" x1="0" y1="0" x2="1" y2="1"><stop offset="0" stop-color="#3ab0e8"/><stop offset="0.6" stop-color="#1a78d0"/><stop offset="1" stop-color="#0a4aa0"/></linearGradient><linearGradient id="edg2" x1="0" y1="0" x2="1" y2="0.3"><stop offset="0" stop-color="#38b8d8"/><stop offset="1" stop-color="#5ad070"/></linearGradient></defs>
<path d="M63 21 Q63 8 76 8 Q88 8 87.5 19 Q87 25 80 25 Q74 25 73 21 Q68 22 69 28 Q72 33 80 32.5 Q77 33 75 33 Q63 33 63 21Z" fill="url(#edg)"/>
<path d="M66 14 Q70 8 76 8 Q88 8 87.5 19 Q87 25 80 25 Q76 25 74.5 22.5 Q80 23 82 19 Q82 13 74 12.5 Q69 12.5 66 14Z" fill="url(#edg2)"/>
<path d="M69 28 Q72 33 80 32.5 Q85 31 87 27 Q83 30 78 29 Q73 27 73 21 Q68 22 69 28Z" fill="#0a3a90"/>
<ellipse cx="120" cy="18" rx="8" ry="6.5" fill="#62c852"/><path d="M114 23 L113 27 L118 24Z" fill="#62c852"/><ellipse cx="129" cy="23" rx="6.5" ry="5" fill="#f2f0f2"/><circle cx="117" cy="17" r="1" fill="#2a6a2a"/><circle cx="123" cy="17" r="1" fill="#2a6a2a"/>
<ellipse cx="173" cy="22" rx="9" ry="9" fill="#111"/><ellipse cx="173" cy="25" rx="6" ry="6" fill="#fff"/><circle cx="173" cy="13" r="6" fill="#111"/><circle cx="171" cy="12" r="1.5" fill="#fff"/><circle cx="175" cy="12" r="1.5" fill="#fff"/><path d="M165 19 Q173 23 181 19 L180 22 Q173 25 166 22Z" fill="#e02020"/><path d="M170 15 H176 L173 17Z" fill="#f0b020"/><ellipse cx="168" cy="31" rx="3" ry="1.3" fill="#f0b020"/><ellipse cx="178" cy="31" rx="3" ry="1.3" fill="#f0b020"/>
<circle cx="222" cy="20" r="10.5" fill="#48b838"/><circle cx="222" cy="20" r="6.5" fill="#fff"/><path d="M216 20 H228 V18 Q228 14 222 14 Q216 14 216 20Z" fill="#48b838"/><path d="M217 21 H228 Q227 26 222 26 Q218 26 217 21Z" fill="#48b838"/><path d="M212 24 Q208 32 216 30 Q230 26 234 12 Q235 7 230 8" fill="none" stroke="#48b838" stroke-width="1.5"/>
<rect x="259" y="8" width="24" height="24" rx="5" fill="#f8f8fa"/><circle cx="271" cy="15" r="4" fill="none" stroke="#2a8ef0" stroke-width="2.6"/><circle cx="266" cy="22" r="4" fill="none" stroke="#2a8ef0" stroke-width="2.6"/><circle cx="276" cy="22" r="4" fill="none" stroke="#2a8ef0" stroke-width="2.6"/><rect x="267" y="29" width="4" height="1.5" fill="#2a8ef0"/><rect x="271" y="29" width="4" height="1.5" fill="#e84a4a"/>
<rect x="308" y="8" width="24" height="24" fill="#2a9a90"/><path d="M310 30 L316 11 L322 30" stroke="#d8f8f0" stroke-width="2.2" fill="none"/><path d="M324 9 V24" stroke="#0a3a38" stroke-width="2"/><rect x="322" y="23" width="6" height="6" fill="none" stroke="#e0f8f0" stroke-width="1.3"/>
<path d="M358 13 H367 L369 15 H380 V30 H358Z" fill="#f0c030"/><path d="M358 17 H380 V30 H358Z" fill="#f8d860"/><path d="M364 22 H374 V30 H371 V25 H367 V30 H364Z" fill="#2a7ad8"/>
<rect x="202" y="38" width="40" height="2" fill="#1a6ad0"/><rect x="251" y="38" width="40" height="2" fill="#1a6ad0"/><rect x="300" y="38" width="40" height="2" fill="#1a6ad0"/><rect x="349" y="38" width="40" height="2" fill="#1a6ad0"/>
</svg>
<svg style="left:1600px;top:1040px" width="320" height="40" viewBox="0 0 320 40">
<rect x="26.5" y="10.5" width="15" height="15" fill="#fff" stroke="#555"/>
<rect x="168.5" y="12.5" width="15" height="15" fill="#fff" stroke="#555"/>
<path d="M71 24 L76.5 18 L82 24" fill="none" stroke="#111" stroke-width="1.3"/>
<ellipse cx="99.5" cy="21" rx="6.5" ry="7" fill="#111"/><ellipse cx="99.5" cy="23" rx="4.5" ry="4.5" fill="#fff"/><circle cx="99.5" cy="14" r="4.5" fill="#111"/><circle cx="98" cy="13.5" r="1.2" fill="#fff"/><circle cx="101" cy="13.5" r="1.2" fill="#fff"/><path d="M93 18 Q99.5 21 106 18 L105 20 Q99.5 22 94 20Z" fill="#e02020"/><ellipse cx="96" cy="28" rx="2.5" ry="1" fill="#f0b020"/><ellipse cx="103" cy="28" rx="2.5" ry="1" fill="#f0b020"/>
<path d="M120 26 Q120 16 131 15 M123 26 Q123 19 131 18 M126 26 Q126 22 130 21" fill="none" stroke="#999" stroke-width="1"/><circle cx="130" cy="26" r="1.5" fill="#111"/>
<path d="M280 12 H300 V24 H287 L283 28 V24 H280Z" fill="#111"/><path d="M283 15 H297 M283 18 H297 M283 21 H292" stroke="#fff" stroke-width="1"/>
<circle cx="294" cy="27" r="8" fill="#dcdcdc" stroke="#888" stroke-width="1"/>
</svg>
<div class="t" style="left:1628px;top:1051px;font-size:13px;color:#111">拼</div>
<div class="t" style="left:1769px;top:1053px;font-size:13px;color:#111">拼</div>
<div class="t" style="left:1738px;top:1051px;font-size:16px;color:#111">英</div>
<div class="t" style="left:1814px;top:1045px;font-size:12px;color:#111">22:44</div>
<div class="t" style="left:1801px;top:1063px;font-size:12px;color:#111;letter-spacing:0.7px">2020/12/4</div>
<div class="t" style="left:1889px;top:1062px;font-size:11px;font-weight:bold;color:#111">2</div>
<div class="a" style="left:1915px;top:1040px;width:1px;height:40px;background:#d8c8c4"></div>
<div class="a" style="left:1770px;top:1008px;width:92px;height:5px;background:#dcdcdc"></div>
<svg style="left:1682px;top:935px" width="188" height="95" viewBox="0 0 188 95">
<path d="M15.5 1.5 H171 Q185.5 1.5 185.5 16 V61 Q185.5 75.5 171 75.5 H143.5 V92 L125 75.5 H15.5 Q1.5 75.5 1.5 61 V16 Q1.5 1.5 15.5 1.5Z" fill="#fffaf0" stroke="#000" stroke-width="2"/>
<circle cx="19" cy="19" r="7.5" fill="#2a5ac8" stroke="#8898b8" stroke-width="1"/><rect x="17.8" y="16" width="2.6" height="8" fill="#fff"/><circle cx="19" cy="13.5" r="1.4" fill="#fff"/>
<rect x="161.5" y="11.5" width="16" height="16" fill="#fff" stroke="#999"/><path d="M165.5 15.5 L173.5 23.5 M173.5 15.5 L165.5 23.5" stroke="#000" stroke-width="2.4"/>
</svg>
<div class="t" style="left:1719px;top:945px;font-size:13px;font-weight:bold;color:#000">通讯中心</div>
<div class="t" style="left:1699px;top:968px;font-size:12px;color:#111;letter-spacing:-0.35px">使软件保持最新的简单方法。</div>
<div class="t" style="left:1699px;top:986px;font-size:12px;color:#00f;text-decoration:underline">单击此处。</div>
</body></html>
